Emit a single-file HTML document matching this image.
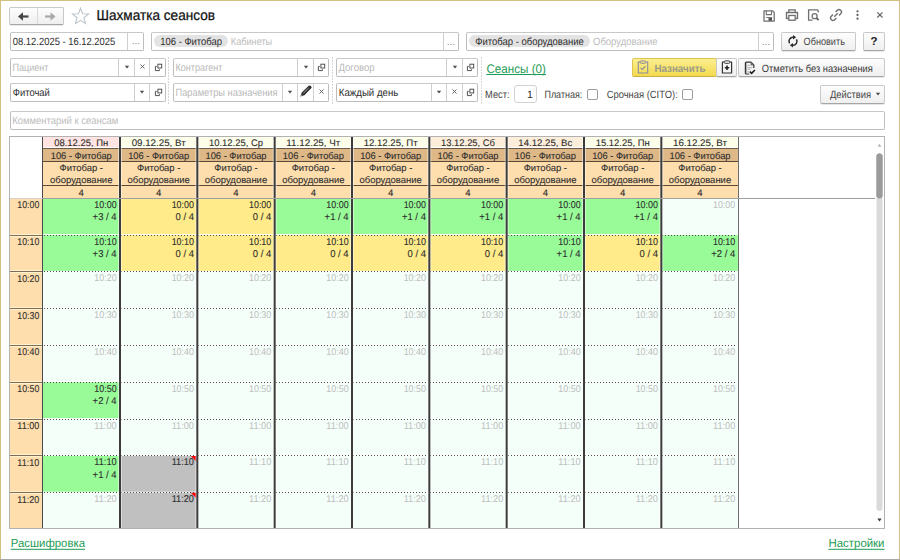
<!DOCTYPE html><html><head><meta charset="utf-8"><style>
*{box-sizing:border-box;margin:0;padding:0}
html,body{width:900px;height:560px;overflow:hidden;background:#fff;font-family:"Liberation Sans", sans-serif;}
.a{position:absolute}
.fld{position:absolute;border:1px solid #bdbdbd;border-top-color:#c8c8c8;border-radius:2px;background:#fff}
.dv{position:absolute;width:1px;background:#cfcfcf}
.btn{position:absolute;border:1px solid #c9c9c9;border-bottom-color:#a6a6a6;border-radius:2px;background:linear-gradient(#fdfdfd,#efefef);box-shadow:0 1px 0 rgba(0,0,0,0.09)}
.tag{position:absolute;height:12px;border-radius:6px;background:#e3e3e3}
.sep{position:absolute;width:1px;background:repeating-linear-gradient(#d6d6d6 0 2px,transparent 2px 3px)}
</style></head><body>
<div class="a" style="left:0;top:0;width:900px;height:1px;background:#d0c182"></div>
<div class="a" style="left:0;top:0;width:1px;height:560px;background:#d0c182"></div>
<div class="a" style="left:899px;top:0;width:1px;height:560px;background:#d0c182"></div>
<div class="a" style="left:0;top:559px;width:900px;height:1px;background:#a9a9a9"></div>
<div class="btn" style="left:9px;top:7px;width:55px;height:18px"></div>
<div class="a" style="left:37px;top:8px;width:1px;height:16px;background:#dadada"></div>
<svg class="a" style="left:17px;top:11px" width="13" height="11" viewBox="0 0 13 11"><path d="M1 5.5 L6 1.2 V9.8 Z" fill="#454545"/><path d="M5 5.5 H11.5" stroke="#454545" stroke-width="2.2"/></svg>
<svg class="a" style="left:44px;top:11px" width="13" height="11" viewBox="0 0 13 11"><path d="M11.5 5.5 L6.5 1.2 V9.8 Z" fill="#a9a9a9"/><path d="M1 5.5 H7.5" stroke="#a9a9a9" stroke-width="2.2"/></svg>
<svg class="a" style="left:71px;top:7px" width="19" height="18" viewBox="0 0 19 18"><path d="M9.5 1.2 L11.6 6.7 L17.6 7 L12.9 10.7 L14.5 16.6 L9.5 13.3 L4.5 16.6 L6.1 10.7 L1.4 7 L7.4 6.7 Z" fill="none" stroke="#bcc4cc" stroke-width="1.1"/></svg>
<svg class="a" style="left:762px;top:9px" width="14" height="14" viewBox="0 0 14 14"><path d="M2 1.8 H10.5 L12.2 3.5 V12.2 H2 Z" fill="none" stroke="#707070" stroke-width="1.3" stroke-linejoin="round"/><path d="M4.3 2 V5.6 H9.5 V2" fill="none" stroke="#707070" stroke-width="1.1"/><rect x="6.5" y="8.8" width="3.5" height="3" fill="#555"/><path d="M4 8.5 H10.2" stroke="#707070" stroke-width="0.9"/></svg>
<svg class="a" style="left:785px;top:8px" width="14" height="14" viewBox="0 0 14 14"><path d="M3.8 4 V1.8 H10.2 V4" fill="none" stroke="#707070" stroke-width="1.3"/><path d="M3.5 10.5 H1.5 V4.5 H12.5 V10.5 H10.5" fill="none" stroke="#707070" stroke-width="1.4" stroke-linejoin="round"/><rect x="3.8" y="7.5" width="6.4" height="4.7" fill="#fff" stroke="#707070" stroke-width="1.3"/></svg>
<svg class="a" style="left:807px;top:8px" width="14" height="14" viewBox="0 0 14 14"><path d="M5.5 12.2 H1.6 V1.8 H10.2 A1 1 0 0 1 11.2 2.8 V4.5" fill="none" stroke="#707070" stroke-width="1.3"/><circle cx="7.6" cy="8.2" r="2.5" fill="none" stroke="#707070" stroke-width="1.3"/><path d="M9.4 10 L11.6 12.2" stroke="#555" stroke-width="1.7"/></svg>
<svg class="a" style="left:829px;top:8px" width="14" height="14" viewBox="0 0 14 14"><path d="M5.2 8.8 L8.8 5.2" stroke="#707070" stroke-width="1.3"/><path d="M6.6 4 L8.3 2.3 A2.3 2.3 0 0 1 11.7 5.7 L10 7.4" fill="none" stroke="#707070" stroke-width="1.4"/><path d="M7.4 10 L5.7 11.7 A2.3 2.3 0 0 1 2.3 8.3 L4 6.6" fill="none" stroke="#707070" stroke-width="1.4"/></svg>
<svg class="a" style="left:855px;top:9px" width="5" height="12" viewBox="0 0 5 12"><circle cx="2.5" cy="2.3" r="1.15" fill="#666"/><circle cx="2.5" cy="6" r="1.15" fill="#666"/><circle cx="2.5" cy="9.7" r="1.15" fill="#666"/></svg>
<svg class="a" style="left:876px;top:11px" width="8" height="8" viewBox="0 0 8 8"><path d="M1.3 1.3 L6.5 6.5 M6.5 1.3 L1.3 6.5" stroke="#666" stroke-width="1.2"/></svg>
<div class="fld" style="left:10px;top:32px;width:134px;height:19px"></div>
<div class="dv" style="left:127px;top:33px;height:17px"></div>
<svg class="a" style="left:131.5px;top:41.7px" width="8" height="3" viewBox="0 0 8 3"><circle cx="1.2" cy="1.5" r="0.6" fill="#777"/><circle cx="4" cy="1.5" r="0.6" fill="#777"/><circle cx="6.8" cy="1.5" r="0.6" fill="#777"/></svg>
<div class="fld" style="left:151px;top:32px;width:308px;height:19px"></div>
<div class="tag" style="left:154px;top:35px;width:74px"></div>
<div class="dv" style="left:443px;top:33px;height:17px"></div><svg class="a" style="left:447px;top:42.5px" width="8" height="3" viewBox="0 0 8 3"><circle cx="1.2" cy="1.5" r="0.6" fill="#777"/><circle cx="4" cy="1.5" r="0.6" fill="#777"/><circle cx="6.8" cy="1.5" r="0.6" fill="#777"/></svg>
<div class="fld" style="left:466px;top:32px;width:308px;height:19px"></div>
<div class="tag" style="left:469px;top:35px;width:121px"></div>
<div class="dv" style="left:758px;top:33px;height:17px"></div><svg class="a" style="left:762px;top:42.5px" width="8" height="3" viewBox="0 0 8 3"><circle cx="1.2" cy="1.5" r="0.6" fill="#777"/><circle cx="4" cy="1.5" r="0.6" fill="#777"/><circle cx="6.8" cy="1.5" r="0.6" fill="#777"/></svg>
<div class="btn" style="left:781px;top:32px;width:75px;height:19px"></div>
<svg class="a" style="left:786.5px;top:35px" width="12" height="13" viewBox="0 0 12 13"><path d="M2.54 8.3 A4 4 0 0 1 6.3 2.3" fill="none" stroke="#2e2e2e" stroke-width="1.6"/><path d="M9.2 2.3 L6 0 V4.6 Z" fill="#2e2e2e"/><path d="M9.46 4.3 A4 4 0 0 1 5.7 10.3" fill="none" stroke="#2e2e2e" stroke-width="1.6"/><path d="M2.8 10.3 L6 8 V12.6 Z" fill="#2e2e2e"/></svg>
<div class="btn" style="left:863px;top:32px;width:22px;height:19px"></div>
<div class="fld" style="left:10px;top:58px;width:156px;height:19px"></div>
<div class="dv" style="left:118px;top:59px;height:17px"></div>
<svg class="a" style="left:123.5px;top:64.7px" width="6" height="4" viewBox="0 0 6 4"><path d="M0.8 0.8 H5.2 L3 3.4 Z" fill="#4a4a4a"/></svg>
<div class="dv" style="left:134px;top:59px;height:17px"></div>
<svg class="a" style="left:138.5px;top:63.2px" width="7" height="7" viewBox="0 0 7 7"><path d="M1.5 1.5 L5.5 5.5 M5.5 1.5 L1.5 5.5" stroke="#555" stroke-width="0.9"/></svg>
<div class="dv" style="left:149px;top:59px;height:17px"></div>
<svg class="a" style="left:153.5px;top:62.7px" width="9" height="9" viewBox="0 0 9 9"><rect x="3.9" y="1.2" width="3.8" height="3.8" fill="none" stroke="#4a4a4a" stroke-width="0.95"/><path d="M2.8 3.4 H1.4 V7.6 H5.4 V6.2" fill="none" stroke="#4a4a4a" stroke-width="0.95"/></svg>
<div class="sep" style="left:168px;top:57px;height:47px"></div>
<div class="fld" style="left:173px;top:58px;width:156px;height:19px"></div>
<div class="dv" style="left:297px;top:59px;height:17px"></div>
<svg class="a" style="left:302.5px;top:64.7px" width="6" height="4" viewBox="0 0 6 4"><path d="M0.8 0.8 H5.2 L3 3.4 Z" fill="#4a4a4a"/></svg>
<div class="dv" style="left:313px;top:59px;height:17px"></div>
<svg class="a" style="left:317.0px;top:62.7px" width="9" height="9" viewBox="0 0 9 9"><rect x="3.9" y="1.2" width="3.8" height="3.8" fill="none" stroke="#4a4a4a" stroke-width="0.95"/><path d="M2.8 3.4 H1.4 V7.6 H5.4 V6.2" fill="none" stroke="#4a4a4a" stroke-width="0.95"/></svg>
<div class="sep" style="left:332px;top:57px;height:47px"></div>
<div class="fld" style="left:336px;top:58px;width:142px;height:19px"></div>
<div class="dv" style="left:446px;top:59px;height:17px"></div>
<svg class="a" style="left:451.5px;top:64.7px" width="6" height="4" viewBox="0 0 6 4"><path d="M0.8 0.8 H5.2 L3 3.4 Z" fill="#4a4a4a"/></svg>
<div class="dv" style="left:462px;top:59px;height:17px"></div>
<svg class="a" style="left:466.0px;top:62.7px" width="9" height="9" viewBox="0 0 9 9"><rect x="3.9" y="1.2" width="3.8" height="3.8" fill="none" stroke="#4a4a4a" stroke-width="0.95"/><path d="M2.8 3.4 H1.4 V7.6 H5.4 V6.2" fill="none" stroke="#4a4a4a" stroke-width="0.95"/></svg>
<div class="sep" style="left:481px;top:57px;height:47px"></div>
<div class="a" style="left:632px;top:58px;width:85px;height:19px;border:1px solid #dcc450;border-bottom-color:#c9b040;border-radius:2px;background:linear-gradient(#fcee90,#f3db4e)"></div>
<svg class="a" style="left:637px;top:60px" width="12" height="14" viewBox="0 0 12 14"><path d="M3 2 H1.3 V13 H10.7 V2 H9" fill="none" stroke="#8b8ca0" stroke-width="1.1" stroke-linejoin="round"/><rect x="3.2" y="0.9" width="5.6" height="2.4" rx="1" fill="#f6e37a" stroke="#8b8ca0" stroke-width="1"/><path d="M3.6 7.8 L5.3 9.5 L8.4 6.2" fill="none" stroke="#8b8ca0" stroke-width="1.1"/></svg>
<div class="btn" style="left:716px;top:58px;width:21px;height:19px"></div>
<svg class="a" style="left:721px;top:60px" width="12" height="14" viewBox="0 0 12 14"><path d="M3 2 H1.4 V13 H10.6 V2 H9" fill="none" stroke="#333" stroke-width="1.2" stroke-linejoin="round"/><rect x="3.2" y="0.9" width="5.6" height="2.4" rx="1" fill="#fff" stroke="#333" stroke-width="1"/><path d="M6 5.6 V10 M3.8 7.8 H8.2" stroke="#222" stroke-width="1.6"/></svg>
<div class="btn" style="left:738px;top:58px;width:147px;height:19px"></div>
<svg class="a" style="left:743.5px;top:60.5px" width="12" height="14" viewBox="0 0 12 14"><path d="M5.2 13 H2.4 A1 1 0 0 1 1.4 12 V2.2 A1 1 0 0 1 2.4 1.2 H7 L9.8 4 V7" fill="none" stroke="#333" stroke-width="1.2" stroke-linejoin="round"/><path d="M2.6 2 V12.4" stroke="#999" stroke-width="0.8"/><path d="M7 1.3 V4 H9.7" fill="#888" stroke="#555" stroke-width="0.8"/><path d="M3.4 4.4 H6.4 M3.4 6.6 H8.4 M3.4 8.2 H6.6 M3.4 10.8 H5.4" stroke="#a0a0a0" stroke-width="0.8"/><path d="M5.9 10.6 L7.6 12.3 L10.9 9" fill="none" stroke="#1e1e1e" stroke-width="1.6"/></svg>
<div class="fld" style="left:10px;top:83px;width:156px;height:19px"></div>
<div class="dv" style="left:134px;top:84px;height:17px"></div>
<svg class="a" style="left:139.0px;top:89.7px" width="6" height="4" viewBox="0 0 6 4"><path d="M0.8 0.8 H5.2 L3 3.4 Z" fill="#4a4a4a"/></svg>
<div class="dv" style="left:149px;top:84px;height:17px"></div>
<svg class="a" style="left:153.5px;top:87.7px" width="9" height="9" viewBox="0 0 9 9"><rect x="3.9" y="1.2" width="3.8" height="3.8" fill="none" stroke="#4a4a4a" stroke-width="0.95"/><path d="M2.8 3.4 H1.4 V7.6 H5.4 V6.2" fill="none" stroke="#4a4a4a" stroke-width="0.95"/></svg>
<div class="fld" style="left:173px;top:83px;width:156px;height:19px"></div>
<div class="dv" style="left:282px;top:84px;height:17px"></div>
<svg class="a" style="left:287.0px;top:89.7px" width="6" height="4" viewBox="0 0 6 4"><path d="M0.8 0.8 H5.2 L3 3.4 Z" fill="#4a4a4a"/></svg>
<div class="dv" style="left:297px;top:84px;height:17px"></div>
<svg class="a" style="left:298.0px;top:84.2px" width="15" height="15" viewBox="0 0 15 15"><path d="M2.4 12.6 L3.8 8.6 L10.4 2.0 L12.9 4.5 L6.4 11.2 Z" fill="#2e2e2e"/><circle cx="11.7" cy="3.3" r="1.75" fill="#2e2e2e"/><path d="M5.4 9.2 L10.6 4.0" stroke="#d8d8d8" stroke-width="0.7"/><path d="M2.4 12.6 L3.2 10.4 L4.6 11.8 Z" fill="#999"/></svg>
<div class="dv" style="left:313px;top:84px;height:17px"></div>
<svg class="a" style="left:317.5px;top:88.2px" width="7" height="7" viewBox="0 0 7 7"><path d="M1.5 1.5 L5.5 5.5 M5.5 1.5 L1.5 5.5" stroke="#555" stroke-width="0.9"/></svg>
<div class="fld" style="left:336px;top:83px;width:142px;height:19px"></div>
<div class="dv" style="left:431px;top:84px;height:17px"></div>
<svg class="a" style="left:436.0px;top:89.7px" width="6" height="4" viewBox="0 0 6 4"><path d="M0.8 0.8 H5.2 L3 3.4 Z" fill="#4a4a4a"/></svg>
<div class="dv" style="left:446px;top:84px;height:17px"></div>
<svg class="a" style="left:451.0px;top:88.2px" width="7" height="7" viewBox="0 0 7 7"><path d="M1.5 1.5 L5.5 5.5 M5.5 1.5 L1.5 5.5" stroke="#555" stroke-width="0.9"/></svg>
<div class="dv" style="left:462px;top:84px;height:17px"></div>
<svg class="a" style="left:466.0px;top:87.7px" width="9" height="9" viewBox="0 0 9 9"><rect x="3.9" y="1.2" width="3.8" height="3.8" fill="none" stroke="#4a4a4a" stroke-width="0.95"/><path d="M2.8 3.4 H1.4 V7.6 H5.4 V6.2" fill="none" stroke="#4a4a4a" stroke-width="0.95"/></svg>
<div class="a" style="left:514px;top:85px;width:23px;height:18px;border:1px solid #d2d2d2;border-radius:3px;background:#fff"></div>
<div class="a" style="left:587px;top:89px;width:11px;height:11px;border:1px solid #9d9d9d;border-radius:2px;background:#fff"></div>
<div class="a" style="left:682px;top:89px;width:11px;height:11px;border:1px solid #9d9d9d;border-radius:2px;background:#fff"></div>
<div class="btn" style="left:820px;top:85px;width:65px;height:19px"></div>
<svg class="a" style="left:875px;top:92px" width="6" height="4" viewBox="0 0 6 4"><path d="M0.8 0.8 H5.2 L3 3.4 Z" fill="#4a4a4a"/></svg>
<div class="fld" style="left:10px;top:111px;width:875px;height:19px"></div>
<svg class="a" style="left:0;top:0" width="900" height="560" viewBox="0 0 900 560"><rect x="9" y="136" width="876" height="393" fill="#fff"/><rect x="43.00" y="137" width="76.25" height="10" fill="#ffe4e1"/><rect x="43.00" y="149" width="76.25" height="12" fill="#deb887"/><rect x="43.00" y="162" width="76.25" height="23" fill="#ffdead"/><rect x="43.00" y="186" width="76.25" height="12" fill="#ffdead"/><rect x="42.25" y="148" width="77.75" height="1" fill="#6b5a48"/><rect x="42.25" y="161" width="77.75" height="1" fill="#5a4a3a"/><rect x="42.25" y="185" width="77.75" height="1" fill="#5a4a3a"/><rect x="120.75" y="137" width="75.83" height="10" fill="#fdfeea"/><rect x="120.75" y="149" width="75.83" height="12" fill="#deb887"/><rect x="120.75" y="162" width="75.83" height="23" fill="#ffdead"/><rect x="120.75" y="186" width="75.83" height="12" fill="#ffdead"/><rect x="120.00" y="148" width="77.33" height="1" fill="#6b5a48"/><rect x="120.00" y="161" width="77.33" height="1" fill="#5a4a3a"/><rect x="120.00" y="185" width="77.33" height="1" fill="#5a4a3a"/><rect x="198.08" y="137" width="75.83" height="10" fill="#fdfeea"/><rect x="198.08" y="149" width="75.83" height="12" fill="#deb887"/><rect x="198.08" y="162" width="75.83" height="23" fill="#ffdead"/><rect x="198.08" y="186" width="75.83" height="12" fill="#ffdead"/><rect x="197.33" y="148" width="77.33" height="1" fill="#6b5a48"/><rect x="197.33" y="161" width="77.33" height="1" fill="#5a4a3a"/><rect x="197.33" y="185" width="77.33" height="1" fill="#5a4a3a"/><rect x="275.42" y="137" width="75.83" height="10" fill="#fdfeea"/><rect x="275.42" y="149" width="75.83" height="12" fill="#deb887"/><rect x="275.42" y="162" width="75.83" height="23" fill="#ffdead"/><rect x="275.42" y="186" width="75.83" height="12" fill="#ffdead"/><rect x="274.67" y="148" width="77.33" height="1" fill="#6b5a48"/><rect x="274.67" y="161" width="77.33" height="1" fill="#5a4a3a"/><rect x="274.67" y="185" width="77.33" height="1" fill="#5a4a3a"/><rect x="352.75" y="137" width="75.83" height="10" fill="#fdfeea"/><rect x="352.75" y="149" width="75.83" height="12" fill="#deb887"/><rect x="352.75" y="162" width="75.83" height="23" fill="#ffdead"/><rect x="352.75" y="186" width="75.83" height="12" fill="#ffdead"/><rect x="352.00" y="148" width="77.33" height="1" fill="#6b5a48"/><rect x="352.00" y="161" width="77.33" height="1" fill="#5a4a3a"/><rect x="352.00" y="185" width="77.33" height="1" fill="#5a4a3a"/><rect x="430.08" y="137" width="75.83" height="10" fill="#fdeedc"/><rect x="430.08" y="149" width="75.83" height="12" fill="#deb887"/><rect x="430.08" y="162" width="75.83" height="23" fill="#ffdead"/><rect x="430.08" y="186" width="75.83" height="12" fill="#ffdead"/><rect x="429.33" y="148" width="77.33" height="1" fill="#6b5a48"/><rect x="429.33" y="161" width="77.33" height="1" fill="#5a4a3a"/><rect x="429.33" y="185" width="77.33" height="1" fill="#5a4a3a"/><rect x="507.41" y="137" width="75.83" height="10" fill="#fdeedc"/><rect x="507.41" y="149" width="75.83" height="12" fill="#deb887"/><rect x="507.41" y="162" width="75.83" height="23" fill="#ffdead"/><rect x="507.41" y="186" width="75.83" height="12" fill="#ffdead"/><rect x="506.66" y="148" width="77.33" height="1" fill="#6b5a48"/><rect x="506.66" y="161" width="77.33" height="1" fill="#5a4a3a"/><rect x="506.66" y="185" width="77.33" height="1" fill="#5a4a3a"/><rect x="584.75" y="137" width="75.83" height="10" fill="#fdfeea"/><rect x="584.75" y="149" width="75.83" height="12" fill="#deb887"/><rect x="584.75" y="162" width="75.83" height="23" fill="#ffdead"/><rect x="584.75" y="186" width="75.83" height="12" fill="#ffdead"/><rect x="584.00" y="148" width="77.33" height="1" fill="#6b5a48"/><rect x="584.00" y="161" width="77.33" height="1" fill="#5a4a3a"/><rect x="584.00" y="185" width="77.33" height="1" fill="#5a4a3a"/><rect x="662.08" y="137" width="75.83" height="10" fill="#fdfeea"/><rect x="662.08" y="149" width="75.83" height="12" fill="#deb887"/><rect x="662.08" y="162" width="75.83" height="23" fill="#ffdead"/><rect x="662.08" y="186" width="75.83" height="12" fill="#ffdead"/><rect x="661.33" y="148" width="77.33" height="1" fill="#6b5a48"/><rect x="661.33" y="161" width="77.33" height="1" fill="#5a4a3a"/><rect x="661.33" y="185" width="77.33" height="1" fill="#5a4a3a"/><rect x="10" y="199" width="32" height="329" fill="#ffdead"/><rect x="10" y="234" width="32" height="3" fill="#fff2cc"/><rect x="10" y="235" width="32" height="1" fill="#806c56"/><rect x="10" y="270" width="32" height="3" fill="#fff2cc"/><rect x="10" y="271" width="32" height="1" fill="#806c56"/><rect x="10" y="307" width="32" height="3" fill="#fff2cc"/><rect x="10" y="308" width="32" height="1" fill="#806c56"/><rect x="10" y="344" width="32" height="3" fill="#fff2cc"/><rect x="10" y="345" width="32" height="1" fill="#806c56"/><rect x="10" y="381" width="32" height="3" fill="#fff2cc"/><rect x="10" y="382" width="32" height="1" fill="#806c56"/><rect x="10" y="418" width="32" height="3" fill="#fff2cc"/><rect x="10" y="419" width="32" height="1" fill="#806c56"/><rect x="10" y="454" width="32" height="3" fill="#fff2cc"/><rect x="10" y="455" width="32" height="1" fill="#806c56"/><rect x="10" y="491" width="32" height="3" fill="#fff2cc"/><rect x="10" y="492" width="32" height="1" fill="#806c56"/><rect x="43.00" y="198.30" width="76.25" height="35.80" fill="#98fb98"/><rect x="120.75" y="198.30" width="75.83" height="35.80" fill="#ffeb8a"/><rect x="198.08" y="198.30" width="75.83" height="35.80" fill="#ffeb8a"/><rect x="275.42" y="198.30" width="75.83" height="35.80" fill="#98fb98"/><rect x="352.75" y="198.30" width="75.83" height="35.80" fill="#98fb98"/><rect x="430.08" y="198.30" width="75.83" height="35.80" fill="#98fb98"/><rect x="507.41" y="198.30" width="75.83" height="35.80" fill="#98fb98"/><rect x="584.75" y="198.30" width="75.83" height="35.80" fill="#98fb98"/><rect x="662.08" y="198.30" width="75.83" height="35.80" fill="#f5fffa"/><rect x="43.00" y="235.10" width="76.25" height="35.80" fill="#98fb98"/><rect x="120.75" y="235.10" width="75.83" height="35.80" fill="#ffeb8a"/><rect x="198.08" y="235.10" width="75.83" height="35.80" fill="#ffeb8a"/><rect x="275.42" y="235.10" width="75.83" height="35.80" fill="#ffeb8a"/><rect x="352.75" y="235.10" width="75.83" height="35.80" fill="#ffeb8a"/><rect x="430.08" y="235.10" width="75.83" height="35.80" fill="#ffeb8a"/><rect x="507.41" y="235.10" width="75.83" height="35.80" fill="#98fb98"/><rect x="584.75" y="235.10" width="75.83" height="35.80" fill="#ffeb8a"/><rect x="662.08" y="235.10" width="75.83" height="35.80" fill="#98fb98"/><rect x="43.00" y="271.90" width="76.25" height="35.80" fill="#f5fffa"/><rect x="120.75" y="271.90" width="75.83" height="35.80" fill="#f5fffa"/><rect x="198.08" y="271.90" width="75.83" height="35.80" fill="#f5fffa"/><rect x="275.42" y="271.90" width="75.83" height="35.80" fill="#f5fffa"/><rect x="352.75" y="271.90" width="75.83" height="35.80" fill="#f5fffa"/><rect x="430.08" y="271.90" width="75.83" height="35.80" fill="#f5fffa"/><rect x="507.41" y="271.90" width="75.83" height="35.80" fill="#f5fffa"/><rect x="584.75" y="271.90" width="75.83" height="35.80" fill="#f5fffa"/><rect x="662.08" y="271.90" width="75.83" height="35.80" fill="#f5fffa"/><rect x="43.00" y="308.70" width="76.25" height="35.80" fill="#f5fffa"/><rect x="120.75" y="308.70" width="75.83" height="35.80" fill="#f5fffa"/><rect x="198.08" y="308.70" width="75.83" height="35.80" fill="#f5fffa"/><rect x="275.42" y="308.70" width="75.83" height="35.80" fill="#f5fffa"/><rect x="352.75" y="308.70" width="75.83" height="35.80" fill="#f5fffa"/><rect x="430.08" y="308.70" width="75.83" height="35.80" fill="#f5fffa"/><rect x="507.41" y="308.70" width="75.83" height="35.80" fill="#f5fffa"/><rect x="584.75" y="308.70" width="75.83" height="35.80" fill="#f5fffa"/><rect x="662.08" y="308.70" width="75.83" height="35.80" fill="#f5fffa"/><rect x="43.00" y="345.50" width="76.25" height="35.80" fill="#f5fffa"/><rect x="120.75" y="345.50" width="75.83" height="35.80" fill="#f5fffa"/><rect x="198.08" y="345.50" width="75.83" height="35.80" fill="#f5fffa"/><rect x="275.42" y="345.50" width="75.83" height="35.80" fill="#f5fffa"/><rect x="352.75" y="345.50" width="75.83" height="35.80" fill="#f5fffa"/><rect x="430.08" y="345.50" width="75.83" height="35.80" fill="#f5fffa"/><rect x="507.41" y="345.50" width="75.83" height="35.80" fill="#f5fffa"/><rect x="584.75" y="345.50" width="75.83" height="35.80" fill="#f5fffa"/><rect x="662.08" y="345.50" width="75.83" height="35.80" fill="#f5fffa"/><rect x="43.00" y="382.30" width="76.25" height="35.80" fill="#98fb98"/><rect x="120.75" y="382.30" width="75.83" height="35.80" fill="#f5fffa"/><rect x="198.08" y="382.30" width="75.83" height="35.80" fill="#f5fffa"/><rect x="275.42" y="382.30" width="75.83" height="35.80" fill="#f5fffa"/><rect x="352.75" y="382.30" width="75.83" height="35.80" fill="#f5fffa"/><rect x="430.08" y="382.30" width="75.83" height="35.80" fill="#f5fffa"/><rect x="507.41" y="382.30" width="75.83" height="35.80" fill="#f5fffa"/><rect x="584.75" y="382.30" width="75.83" height="35.80" fill="#f5fffa"/><rect x="662.08" y="382.30" width="75.83" height="35.80" fill="#f5fffa"/><rect x="43.00" y="419.10" width="76.25" height="35.80" fill="#f5fffa"/><rect x="120.75" y="419.10" width="75.83" height="35.80" fill="#f5fffa"/><rect x="198.08" y="419.10" width="75.83" height="35.80" fill="#f5fffa"/><rect x="275.42" y="419.10" width="75.83" height="35.80" fill="#f5fffa"/><rect x="352.75" y="419.10" width="75.83" height="35.80" fill="#f5fffa"/><rect x="430.08" y="419.10" width="75.83" height="35.80" fill="#f5fffa"/><rect x="507.41" y="419.10" width="75.83" height="35.80" fill="#f5fffa"/><rect x="584.75" y="419.10" width="75.83" height="35.80" fill="#f5fffa"/><rect x="662.08" y="419.10" width="75.83" height="35.80" fill="#f5fffa"/><rect x="43.00" y="455.90" width="76.25" height="35.80" fill="#98fb98"/><rect x="120.75" y="455.90" width="75.83" height="35.80" fill="#c0c0c0"/><path d="M190.83 455.90 H196.33 V461.40 Z" fill="#f00"/><rect x="198.08" y="455.90" width="75.83" height="35.80" fill="#f5fffa"/><rect x="275.42" y="455.90" width="75.83" height="35.80" fill="#f5fffa"/><rect x="352.75" y="455.90" width="75.83" height="35.80" fill="#f5fffa"/><rect x="430.08" y="455.90" width="75.83" height="35.80" fill="#f5fffa"/><rect x="507.41" y="455.90" width="75.83" height="35.80" fill="#f5fffa"/><rect x="584.75" y="455.90" width="75.83" height="35.80" fill="#f5fffa"/><rect x="662.08" y="455.90" width="75.83" height="35.80" fill="#f5fffa"/><rect x="43.00" y="492.70" width="76.25" height="35.80" fill="#f5fffa"/><rect x="120.75" y="492.70" width="75.83" height="35.80" fill="#c0c0c0"/><path d="M190.83 492.70 H196.33 V498.20 Z" fill="#f00"/><rect x="198.08" y="492.70" width="75.83" height="35.80" fill="#f5fffa"/><rect x="275.42" y="492.70" width="75.83" height="35.80" fill="#f5fffa"/><rect x="352.75" y="492.70" width="75.83" height="35.80" fill="#f5fffa"/><rect x="430.08" y="492.70" width="75.83" height="35.80" fill="#f5fffa"/><rect x="507.41" y="492.70" width="75.83" height="35.80" fill="#f5fffa"/><rect x="584.75" y="492.70" width="75.83" height="35.80" fill="#f5fffa"/><rect x="662.08" y="492.70" width="75.83" height="35.80" fill="#f5fffa"/><path d="M44 235h1v1h-1zM47 235h1v1h-1zM50 235h1v1h-1zM53 235h1v1h-1zM56 235h1v1h-1zM59 235h1v1h-1zM62 235h1v1h-1zM65 235h1v1h-1zM68 235h1v1h-1zM71 235h1v1h-1zM74 235h1v1h-1zM77 235h1v1h-1zM80 235h1v1h-1zM83 235h1v1h-1zM86 235h1v1h-1zM89 235h1v1h-1zM92 235h1v1h-1zM95 235h1v1h-1zM98 235h1v1h-1zM101 235h1v1h-1zM104 235h1v1h-1zM107 235h1v1h-1zM110 235h1v1h-1zM113 235h1v1h-1zM116 235h1v1h-1zM121 235h1v1h-1zM124 235h1v1h-1zM127 235h1v1h-1zM130 235h1v1h-1zM133 235h1v1h-1zM136 235h1v1h-1zM139 235h1v1h-1zM142 235h1v1h-1zM145 235h1v1h-1zM148 235h1v1h-1zM151 235h1v1h-1zM154 235h1v1h-1zM157 235h1v1h-1zM160 235h1v1h-1zM163 235h1v1h-1zM166 235h1v1h-1zM169 235h1v1h-1zM172 235h1v1h-1zM175 235h1v1h-1zM178 235h1v1h-1zM181 235h1v1h-1zM184 235h1v1h-1zM187 235h1v1h-1zM190 235h1v1h-1zM193 235h1v1h-1zM198 235h1v1h-1zM201 235h1v1h-1zM204 235h1v1h-1zM207 235h1v1h-1zM210 235h1v1h-1zM213 235h1v1h-1zM216 235h1v1h-1zM219 235h1v1h-1zM222 235h1v1h-1zM225 235h1v1h-1zM228 235h1v1h-1zM231 235h1v1h-1zM234 235h1v1h-1zM237 235h1v1h-1zM240 235h1v1h-1zM243 235h1v1h-1zM246 235h1v1h-1zM249 235h1v1h-1zM252 235h1v1h-1zM255 235h1v1h-1zM258 235h1v1h-1zM261 235h1v1h-1zM264 235h1v1h-1zM267 235h1v1h-1zM270 235h1v1h-1zM276 235h1v1h-1zM279 235h1v1h-1zM282 235h1v1h-1zM285 235h1v1h-1zM288 235h1v1h-1zM291 235h1v1h-1zM294 235h1v1h-1zM297 235h1v1h-1zM300 235h1v1h-1zM303 235h1v1h-1zM306 235h1v1h-1zM309 235h1v1h-1zM312 235h1v1h-1zM315 235h1v1h-1zM318 235h1v1h-1zM321 235h1v1h-1zM324 235h1v1h-1zM327 235h1v1h-1zM330 235h1v1h-1zM333 235h1v1h-1zM336 235h1v1h-1zM339 235h1v1h-1zM342 235h1v1h-1zM345 235h1v1h-1zM348 235h1v1h-1zM353 235h1v1h-1zM356 235h1v1h-1zM359 235h1v1h-1zM362 235h1v1h-1zM365 235h1v1h-1zM368 235h1v1h-1zM371 235h1v1h-1zM374 235h1v1h-1zM377 235h1v1h-1zM380 235h1v1h-1zM383 235h1v1h-1zM386 235h1v1h-1zM389 235h1v1h-1zM392 235h1v1h-1zM395 235h1v1h-1zM398 235h1v1h-1zM401 235h1v1h-1zM404 235h1v1h-1zM407 235h1v1h-1zM410 235h1v1h-1zM413 235h1v1h-1zM416 235h1v1h-1zM419 235h1v1h-1zM422 235h1v1h-1zM425 235h1v1h-1zM430 235h1v1h-1zM433 235h1v1h-1zM436 235h1v1h-1zM439 235h1v1h-1zM442 235h1v1h-1zM445 235h1v1h-1zM448 235h1v1h-1zM451 235h1v1h-1zM454 235h1v1h-1zM457 235h1v1h-1zM460 235h1v1h-1zM463 235h1v1h-1zM466 235h1v1h-1zM469 235h1v1h-1zM472 235h1v1h-1zM475 235h1v1h-1zM478 235h1v1h-1zM481 235h1v1h-1zM484 235h1v1h-1zM487 235h1v1h-1zM490 235h1v1h-1zM493 235h1v1h-1zM496 235h1v1h-1zM499 235h1v1h-1zM502 235h1v1h-1zM508 235h1v1h-1zM511 235h1v1h-1zM514 235h1v1h-1zM517 235h1v1h-1zM520 235h1v1h-1zM523 235h1v1h-1zM526 235h1v1h-1zM529 235h1v1h-1zM532 235h1v1h-1zM535 235h1v1h-1zM538 235h1v1h-1zM541 235h1v1h-1zM544 235h1v1h-1zM547 235h1v1h-1zM550 235h1v1h-1zM553 235h1v1h-1zM556 235h1v1h-1zM559 235h1v1h-1zM562 235h1v1h-1zM565 235h1v1h-1zM568 235h1v1h-1zM571 235h1v1h-1zM574 235h1v1h-1zM577 235h1v1h-1zM580 235h1v1h-1zM585 235h1v1h-1zM588 235h1v1h-1zM591 235h1v1h-1zM594 235h1v1h-1zM597 235h1v1h-1zM600 235h1v1h-1zM603 235h1v1h-1zM606 235h1v1h-1zM609 235h1v1h-1zM612 235h1v1h-1zM615 235h1v1h-1zM618 235h1v1h-1zM621 235h1v1h-1zM624 235h1v1h-1zM627 235h1v1h-1zM630 235h1v1h-1zM633 235h1v1h-1zM636 235h1v1h-1zM639 235h1v1h-1zM642 235h1v1h-1zM645 235h1v1h-1zM648 235h1v1h-1zM651 235h1v1h-1zM654 235h1v1h-1zM657 235h1v1h-1zM662 235h1v1h-1zM665 235h1v1h-1zM668 235h1v1h-1zM671 235h1v1h-1zM674 235h1v1h-1zM677 235h1v1h-1zM680 235h1v1h-1zM683 235h1v1h-1zM686 235h1v1h-1zM689 235h1v1h-1zM692 235h1v1h-1zM695 235h1v1h-1zM698 235h1v1h-1zM701 235h1v1h-1zM704 235h1v1h-1zM707 235h1v1h-1zM710 235h1v1h-1zM713 235h1v1h-1zM716 235h1v1h-1zM719 235h1v1h-1zM722 235h1v1h-1zM725 235h1v1h-1zM728 235h1v1h-1zM731 235h1v1h-1zM734 235h1v1h-1zM44 271h1v1h-1zM47 271h1v1h-1zM50 271h1v1h-1zM53 271h1v1h-1zM56 271h1v1h-1zM59 271h1v1h-1zM62 271h1v1h-1zM65 271h1v1h-1zM68 271h1v1h-1zM71 271h1v1h-1zM74 271h1v1h-1zM77 271h1v1h-1zM80 271h1v1h-1zM83 271h1v1h-1zM86 271h1v1h-1zM89 271h1v1h-1zM92 271h1v1h-1zM95 271h1v1h-1zM98 271h1v1h-1zM101 271h1v1h-1zM104 271h1v1h-1zM107 271h1v1h-1zM110 271h1v1h-1zM113 271h1v1h-1zM116 271h1v1h-1zM121 271h1v1h-1zM124 271h1v1h-1zM127 271h1v1h-1zM130 271h1v1h-1zM133 271h1v1h-1zM136 271h1v1h-1zM139 271h1v1h-1zM142 271h1v1h-1zM145 271h1v1h-1zM148 271h1v1h-1zM151 271h1v1h-1zM154 271h1v1h-1zM157 271h1v1h-1zM160 271h1v1h-1zM163 271h1v1h-1zM166 271h1v1h-1zM169 271h1v1h-1zM172 271h1v1h-1zM175 271h1v1h-1zM178 271h1v1h-1zM181 271h1v1h-1zM184 271h1v1h-1zM187 271h1v1h-1zM190 271h1v1h-1zM193 271h1v1h-1zM198 271h1v1h-1zM201 271h1v1h-1zM204 271h1v1h-1zM207 271h1v1h-1zM210 271h1v1h-1zM213 271h1v1h-1zM216 271h1v1h-1zM219 271h1v1h-1zM222 271h1v1h-1zM225 271h1v1h-1zM228 271h1v1h-1zM231 271h1v1h-1zM234 271h1v1h-1zM237 271h1v1h-1zM240 271h1v1h-1zM243 271h1v1h-1zM246 271h1v1h-1zM249 271h1v1h-1zM252 271h1v1h-1zM255 271h1v1h-1zM258 271h1v1h-1zM261 271h1v1h-1zM264 271h1v1h-1zM267 271h1v1h-1zM270 271h1v1h-1zM276 271h1v1h-1zM279 271h1v1h-1zM282 271h1v1h-1zM285 271h1v1h-1zM288 271h1v1h-1zM291 271h1v1h-1zM294 271h1v1h-1zM297 271h1v1h-1zM300 271h1v1h-1zM303 271h1v1h-1zM306 271h1v1h-1zM309 271h1v1h-1zM312 271h1v1h-1zM315 271h1v1h-1zM318 271h1v1h-1zM321 271h1v1h-1zM324 271h1v1h-1zM327 271h1v1h-1zM330 271h1v1h-1zM333 271h1v1h-1zM336 271h1v1h-1zM339 271h1v1h-1zM342 271h1v1h-1zM345 271h1v1h-1zM348 271h1v1h-1zM353 271h1v1h-1zM356 271h1v1h-1zM359 271h1v1h-1zM362 271h1v1h-1zM365 271h1v1h-1zM368 271h1v1h-1zM371 271h1v1h-1zM374 271h1v1h-1zM377 271h1v1h-1zM380 271h1v1h-1zM383 271h1v1h-1zM386 271h1v1h-1zM389 271h1v1h-1zM392 271h1v1h-1zM395 271h1v1h-1zM398 271h1v1h-1zM401 271h1v1h-1zM404 271h1v1h-1zM407 271h1v1h-1zM410 271h1v1h-1zM413 271h1v1h-1zM416 271h1v1h-1zM419 271h1v1h-1zM422 271h1v1h-1zM425 271h1v1h-1zM430 271h1v1h-1zM433 271h1v1h-1zM436 271h1v1h-1zM439 271h1v1h-1zM442 271h1v1h-1zM445 271h1v1h-1zM448 271h1v1h-1zM451 271h1v1h-1zM454 271h1v1h-1zM457 271h1v1h-1zM460 271h1v1h-1zM463 271h1v1h-1zM466 271h1v1h-1zM469 271h1v1h-1zM472 271h1v1h-1zM475 271h1v1h-1zM478 271h1v1h-1zM481 271h1v1h-1zM484 271h1v1h-1zM487 271h1v1h-1zM490 271h1v1h-1zM493 271h1v1h-1zM496 271h1v1h-1zM499 271h1v1h-1zM502 271h1v1h-1zM508 271h1v1h-1zM511 271h1v1h-1zM514 271h1v1h-1zM517 271h1v1h-1zM520 271h1v1h-1zM523 271h1v1h-1zM526 271h1v1h-1zM529 271h1v1h-1zM532 271h1v1h-1zM535 271h1v1h-1zM538 271h1v1h-1zM541 271h1v1h-1zM544 271h1v1h-1zM547 271h1v1h-1zM550 271h1v1h-1zM553 271h1v1h-1zM556 271h1v1h-1zM559 271h1v1h-1zM562 271h1v1h-1zM565 271h1v1h-1zM568 271h1v1h-1zM571 271h1v1h-1zM574 271h1v1h-1zM577 271h1v1h-1zM580 271h1v1h-1zM585 271h1v1h-1zM588 271h1v1h-1zM591 271h1v1h-1zM594 271h1v1h-1zM597 271h1v1h-1zM600 271h1v1h-1zM603 271h1v1h-1zM606 271h1v1h-1zM609 271h1v1h-1zM612 271h1v1h-1zM615 271h1v1h-1zM618 271h1v1h-1zM621 271h1v1h-1zM624 271h1v1h-1zM627 271h1v1h-1zM630 271h1v1h-1zM633 271h1v1h-1zM636 271h1v1h-1zM639 271h1v1h-1zM642 271h1v1h-1zM645 271h1v1h-1zM648 271h1v1h-1zM651 271h1v1h-1zM654 271h1v1h-1zM657 271h1v1h-1zM662 271h1v1h-1zM665 271h1v1h-1zM668 271h1v1h-1zM671 271h1v1h-1zM674 271h1v1h-1zM677 271h1v1h-1zM680 271h1v1h-1zM683 271h1v1h-1zM686 271h1v1h-1zM689 271h1v1h-1zM692 271h1v1h-1zM695 271h1v1h-1zM698 271h1v1h-1zM701 271h1v1h-1zM704 271h1v1h-1zM707 271h1v1h-1zM710 271h1v1h-1zM713 271h1v1h-1zM716 271h1v1h-1zM719 271h1v1h-1zM722 271h1v1h-1zM725 271h1v1h-1zM728 271h1v1h-1zM731 271h1v1h-1zM734 271h1v1h-1zM44 308h1v1h-1zM47 308h1v1h-1zM50 308h1v1h-1zM53 308h1v1h-1zM56 308h1v1h-1zM59 308h1v1h-1zM62 308h1v1h-1zM65 308h1v1h-1zM68 308h1v1h-1zM71 308h1v1h-1zM74 308h1v1h-1zM77 308h1v1h-1zM80 308h1v1h-1zM83 308h1v1h-1zM86 308h1v1h-1zM89 308h1v1h-1zM92 308h1v1h-1zM95 308h1v1h-1zM98 308h1v1h-1zM101 308h1v1h-1zM104 308h1v1h-1zM107 308h1v1h-1zM110 308h1v1h-1zM113 308h1v1h-1zM116 308h1v1h-1zM121 308h1v1h-1zM124 308h1v1h-1zM127 308h1v1h-1zM130 308h1v1h-1zM133 308h1v1h-1zM136 308h1v1h-1zM139 308h1v1h-1zM142 308h1v1h-1zM145 308h1v1h-1zM148 308h1v1h-1zM151 308h1v1h-1zM154 308h1v1h-1zM157 308h1v1h-1zM160 308h1v1h-1zM163 308h1v1h-1zM166 308h1v1h-1zM169 308h1v1h-1zM172 308h1v1h-1zM175 308h1v1h-1zM178 308h1v1h-1zM181 308h1v1h-1zM184 308h1v1h-1zM187 308h1v1h-1zM190 308h1v1h-1zM193 308h1v1h-1zM198 308h1v1h-1zM201 308h1v1h-1zM204 308h1v1h-1zM207 308h1v1h-1zM210 308h1v1h-1zM213 308h1v1h-1zM216 308h1v1h-1zM219 308h1v1h-1zM222 308h1v1h-1zM225 308h1v1h-1zM228 308h1v1h-1zM231 308h1v1h-1zM234 308h1v1h-1zM237 308h1v1h-1zM240 308h1v1h-1zM243 308h1v1h-1zM246 308h1v1h-1zM249 308h1v1h-1zM252 308h1v1h-1zM255 308h1v1h-1zM258 308h1v1h-1zM261 308h1v1h-1zM264 308h1v1h-1zM267 308h1v1h-1zM270 308h1v1h-1zM276 308h1v1h-1zM279 308h1v1h-1zM282 308h1v1h-1zM285 308h1v1h-1zM288 308h1v1h-1zM291 308h1v1h-1zM294 308h1v1h-1zM297 308h1v1h-1zM300 308h1v1h-1zM303 308h1v1h-1zM306 308h1v1h-1zM309 308h1v1h-1zM312 308h1v1h-1zM315 308h1v1h-1zM318 308h1v1h-1zM321 308h1v1h-1zM324 308h1v1h-1zM327 308h1v1h-1zM330 308h1v1h-1zM333 308h1v1h-1zM336 308h1v1h-1zM339 308h1v1h-1zM342 308h1v1h-1zM345 308h1v1h-1zM348 308h1v1h-1zM353 308h1v1h-1zM356 308h1v1h-1zM359 308h1v1h-1zM362 308h1v1h-1zM365 308h1v1h-1zM368 308h1v1h-1zM371 308h1v1h-1zM374 308h1v1h-1zM377 308h1v1h-1zM380 308h1v1h-1zM383 308h1v1h-1zM386 308h1v1h-1zM389 308h1v1h-1zM392 308h1v1h-1zM395 308h1v1h-1zM398 308h1v1h-1zM401 308h1v1h-1zM404 308h1v1h-1zM407 308h1v1h-1zM410 308h1v1h-1zM413 308h1v1h-1zM416 308h1v1h-1zM419 308h1v1h-1zM422 308h1v1h-1zM425 308h1v1h-1zM430 308h1v1h-1zM433 308h1v1h-1zM436 308h1v1h-1zM439 308h1v1h-1zM442 308h1v1h-1zM445 308h1v1h-1zM448 308h1v1h-1zM451 308h1v1h-1zM454 308h1v1h-1zM457 308h1v1h-1zM460 308h1v1h-1zM463 308h1v1h-1zM466 308h1v1h-1zM469 308h1v1h-1zM472 308h1v1h-1zM475 308h1v1h-1zM478 308h1v1h-1zM481 308h1v1h-1zM484 308h1v1h-1zM487 308h1v1h-1zM490 308h1v1h-1zM493 308h1v1h-1zM496 308h1v1h-1zM499 308h1v1h-1zM502 308h1v1h-1zM508 308h1v1h-1zM511 308h1v1h-1zM514 308h1v1h-1zM517 308h1v1h-1zM520 308h1v1h-1zM523 308h1v1h-1zM526 308h1v1h-1zM529 308h1v1h-1zM532 308h1v1h-1zM535 308h1v1h-1zM538 308h1v1h-1zM541 308h1v1h-1zM544 308h1v1h-1zM547 308h1v1h-1zM550 308h1v1h-1zM553 308h1v1h-1zM556 308h1v1h-1zM559 308h1v1h-1zM562 308h1v1h-1zM565 308h1v1h-1zM568 308h1v1h-1zM571 308h1v1h-1zM574 308h1v1h-1zM577 308h1v1h-1zM580 308h1v1h-1zM585 308h1v1h-1zM588 308h1v1h-1zM591 308h1v1h-1zM594 308h1v1h-1zM597 308h1v1h-1zM600 308h1v1h-1zM603 308h1v1h-1zM606 308h1v1h-1zM609 308h1v1h-1zM612 308h1v1h-1zM615 308h1v1h-1zM618 308h1v1h-1zM621 308h1v1h-1zM624 308h1v1h-1zM627 308h1v1h-1zM630 308h1v1h-1zM633 308h1v1h-1zM636 308h1v1h-1zM639 308h1v1h-1zM642 308h1v1h-1zM645 308h1v1h-1zM648 308h1v1h-1zM651 308h1v1h-1zM654 308h1v1h-1zM657 308h1v1h-1zM662 308h1v1h-1zM665 308h1v1h-1zM668 308h1v1h-1zM671 308h1v1h-1zM674 308h1v1h-1zM677 308h1v1h-1zM680 308h1v1h-1zM683 308h1v1h-1zM686 308h1v1h-1zM689 308h1v1h-1zM692 308h1v1h-1zM695 308h1v1h-1zM698 308h1v1h-1zM701 308h1v1h-1zM704 308h1v1h-1zM707 308h1v1h-1zM710 308h1v1h-1zM713 308h1v1h-1zM716 308h1v1h-1zM719 308h1v1h-1zM722 308h1v1h-1zM725 308h1v1h-1zM728 308h1v1h-1zM731 308h1v1h-1zM734 308h1v1h-1zM44 345h1v1h-1zM47 345h1v1h-1zM50 345h1v1h-1zM53 345h1v1h-1zM56 345h1v1h-1zM59 345h1v1h-1zM62 345h1v1h-1zM65 345h1v1h-1zM68 345h1v1h-1zM71 345h1v1h-1zM74 345h1v1h-1zM77 345h1v1h-1zM80 345h1v1h-1zM83 345h1v1h-1zM86 345h1v1h-1zM89 345h1v1h-1zM92 345h1v1h-1zM95 345h1v1h-1zM98 345h1v1h-1zM101 345h1v1h-1zM104 345h1v1h-1zM107 345h1v1h-1zM110 345h1v1h-1zM113 345h1v1h-1zM116 345h1v1h-1zM121 345h1v1h-1zM124 345h1v1h-1zM127 345h1v1h-1zM130 345h1v1h-1zM133 345h1v1h-1zM136 345h1v1h-1zM139 345h1v1h-1zM142 345h1v1h-1zM145 345h1v1h-1zM148 345h1v1h-1zM151 345h1v1h-1zM154 345h1v1h-1zM157 345h1v1h-1zM160 345h1v1h-1zM163 345h1v1h-1zM166 345h1v1h-1zM169 345h1v1h-1zM172 345h1v1h-1zM175 345h1v1h-1zM178 345h1v1h-1zM181 345h1v1h-1zM184 345h1v1h-1zM187 345h1v1h-1zM190 345h1v1h-1zM193 345h1v1h-1zM198 345h1v1h-1zM201 345h1v1h-1zM204 345h1v1h-1zM207 345h1v1h-1zM210 345h1v1h-1zM213 345h1v1h-1zM216 345h1v1h-1zM219 345h1v1h-1zM222 345h1v1h-1zM225 345h1v1h-1zM228 345h1v1h-1zM231 345h1v1h-1zM234 345h1v1h-1zM237 345h1v1h-1zM240 345h1v1h-1zM243 345h1v1h-1zM246 345h1v1h-1zM249 345h1v1h-1zM252 345h1v1h-1zM255 345h1v1h-1zM258 345h1v1h-1zM261 345h1v1h-1zM264 345h1v1h-1zM267 345h1v1h-1zM270 345h1v1h-1zM276 345h1v1h-1zM279 345h1v1h-1zM282 345h1v1h-1zM285 345h1v1h-1zM288 345h1v1h-1zM291 345h1v1h-1zM294 345h1v1h-1zM297 345h1v1h-1zM300 345h1v1h-1zM303 345h1v1h-1zM306 345h1v1h-1zM309 345h1v1h-1zM312 345h1v1h-1zM315 345h1v1h-1zM318 345h1v1h-1zM321 345h1v1h-1zM324 345h1v1h-1zM327 345h1v1h-1zM330 345h1v1h-1zM333 345h1v1h-1zM336 345h1v1h-1zM339 345h1v1h-1zM342 345h1v1h-1zM345 345h1v1h-1zM348 345h1v1h-1zM353 345h1v1h-1zM356 345h1v1h-1zM359 345h1v1h-1zM362 345h1v1h-1zM365 345h1v1h-1zM368 345h1v1h-1zM371 345h1v1h-1zM374 345h1v1h-1zM377 345h1v1h-1zM380 345h1v1h-1zM383 345h1v1h-1zM386 345h1v1h-1zM389 345h1v1h-1zM392 345h1v1h-1zM395 345h1v1h-1zM398 345h1v1h-1zM401 345h1v1h-1zM404 345h1v1h-1zM407 345h1v1h-1zM410 345h1v1h-1zM413 345h1v1h-1zM416 345h1v1h-1zM419 345h1v1h-1zM422 345h1v1h-1zM425 345h1v1h-1zM430 345h1v1h-1zM433 345h1v1h-1zM436 345h1v1h-1zM439 345h1v1h-1zM442 345h1v1h-1zM445 345h1v1h-1zM448 345h1v1h-1zM451 345h1v1h-1zM454 345h1v1h-1zM457 345h1v1h-1zM460 345h1v1h-1zM463 345h1v1h-1zM466 345h1v1h-1zM469 345h1v1h-1zM472 345h1v1h-1zM475 345h1v1h-1zM478 345h1v1h-1zM481 345h1v1h-1zM484 345h1v1h-1zM487 345h1v1h-1zM490 345h1v1h-1zM493 345h1v1h-1zM496 345h1v1h-1zM499 345h1v1h-1zM502 345h1v1h-1zM508 345h1v1h-1zM511 345h1v1h-1zM514 345h1v1h-1zM517 345h1v1h-1zM520 345h1v1h-1zM523 345h1v1h-1zM526 345h1v1h-1zM529 345h1v1h-1zM532 345h1v1h-1zM535 345h1v1h-1zM538 345h1v1h-1zM541 345h1v1h-1zM544 345h1v1h-1zM547 345h1v1h-1zM550 345h1v1h-1zM553 345h1v1h-1zM556 345h1v1h-1zM559 345h1v1h-1zM562 345h1v1h-1zM565 345h1v1h-1zM568 345h1v1h-1zM571 345h1v1h-1zM574 345h1v1h-1zM577 345h1v1h-1zM580 345h1v1h-1zM585 345h1v1h-1zM588 345h1v1h-1zM591 345h1v1h-1zM594 345h1v1h-1zM597 345h1v1h-1zM600 345h1v1h-1zM603 345h1v1h-1zM606 345h1v1h-1zM609 345h1v1h-1zM612 345h1v1h-1zM615 345h1v1h-1zM618 345h1v1h-1zM621 345h1v1h-1zM624 345h1v1h-1zM627 345h1v1h-1zM630 345h1v1h-1zM633 345h1v1h-1zM636 345h1v1h-1zM639 345h1v1h-1zM642 345h1v1h-1zM645 345h1v1h-1zM648 345h1v1h-1zM651 345h1v1h-1zM654 345h1v1h-1zM657 345h1v1h-1zM662 345h1v1h-1zM665 345h1v1h-1zM668 345h1v1h-1zM671 345h1v1h-1zM674 345h1v1h-1zM677 345h1v1h-1zM680 345h1v1h-1zM683 345h1v1h-1zM686 345h1v1h-1zM689 345h1v1h-1zM692 345h1v1h-1zM695 345h1v1h-1zM698 345h1v1h-1zM701 345h1v1h-1zM704 345h1v1h-1zM707 345h1v1h-1zM710 345h1v1h-1zM713 345h1v1h-1zM716 345h1v1h-1zM719 345h1v1h-1zM722 345h1v1h-1zM725 345h1v1h-1zM728 345h1v1h-1zM731 345h1v1h-1zM734 345h1v1h-1zM44 382h1v1h-1zM47 382h1v1h-1zM50 382h1v1h-1zM53 382h1v1h-1zM56 382h1v1h-1zM59 382h1v1h-1zM62 382h1v1h-1zM65 382h1v1h-1zM68 382h1v1h-1zM71 382h1v1h-1zM74 382h1v1h-1zM77 382h1v1h-1zM80 382h1v1h-1zM83 382h1v1h-1zM86 382h1v1h-1zM89 382h1v1h-1zM92 382h1v1h-1zM95 382h1v1h-1zM98 382h1v1h-1zM101 382h1v1h-1zM104 382h1v1h-1zM107 382h1v1h-1zM110 382h1v1h-1zM113 382h1v1h-1zM116 382h1v1h-1zM121 382h1v1h-1zM124 382h1v1h-1zM127 382h1v1h-1zM130 382h1v1h-1zM133 382h1v1h-1zM136 382h1v1h-1zM139 382h1v1h-1zM142 382h1v1h-1zM145 382h1v1h-1zM148 382h1v1h-1zM151 382h1v1h-1zM154 382h1v1h-1zM157 382h1v1h-1zM160 382h1v1h-1zM163 382h1v1h-1zM166 382h1v1h-1zM169 382h1v1h-1zM172 382h1v1h-1zM175 382h1v1h-1zM178 382h1v1h-1zM181 382h1v1h-1zM184 382h1v1h-1zM187 382h1v1h-1zM190 382h1v1h-1zM193 382h1v1h-1zM198 382h1v1h-1zM201 382h1v1h-1zM204 382h1v1h-1zM207 382h1v1h-1zM210 382h1v1h-1zM213 382h1v1h-1zM216 382h1v1h-1zM219 382h1v1h-1zM222 382h1v1h-1zM225 382h1v1h-1zM228 382h1v1h-1zM231 382h1v1h-1zM234 382h1v1h-1zM237 382h1v1h-1zM240 382h1v1h-1zM243 382h1v1h-1zM246 382h1v1h-1zM249 382h1v1h-1zM252 382h1v1h-1zM255 382h1v1h-1zM258 382h1v1h-1zM261 382h1v1h-1zM264 382h1v1h-1zM267 382h1v1h-1zM270 382h1v1h-1zM276 382h1v1h-1zM279 382h1v1h-1zM282 382h1v1h-1zM285 382h1v1h-1zM288 382h1v1h-1zM291 382h1v1h-1zM294 382h1v1h-1zM297 382h1v1h-1zM300 382h1v1h-1zM303 382h1v1h-1zM306 382h1v1h-1zM309 382h1v1h-1zM312 382h1v1h-1zM315 382h1v1h-1zM318 382h1v1h-1zM321 382h1v1h-1zM324 382h1v1h-1zM327 382h1v1h-1zM330 382h1v1h-1zM333 382h1v1h-1zM336 382h1v1h-1zM339 382h1v1h-1zM342 382h1v1h-1zM345 382h1v1h-1zM348 382h1v1h-1zM353 382h1v1h-1zM356 382h1v1h-1zM359 382h1v1h-1zM362 382h1v1h-1zM365 382h1v1h-1zM368 382h1v1h-1zM371 382h1v1h-1zM374 382h1v1h-1zM377 382h1v1h-1zM380 382h1v1h-1zM383 382h1v1h-1zM386 382h1v1h-1zM389 382h1v1h-1zM392 382h1v1h-1zM395 382h1v1h-1zM398 382h1v1h-1zM401 382h1v1h-1zM404 382h1v1h-1zM407 382h1v1h-1zM410 382h1v1h-1zM413 382h1v1h-1zM416 382h1v1h-1zM419 382h1v1h-1zM422 382h1v1h-1zM425 382h1v1h-1zM430 382h1v1h-1zM433 382h1v1h-1zM436 382h1v1h-1zM439 382h1v1h-1zM442 382h1v1h-1zM445 382h1v1h-1zM448 382h1v1h-1zM451 382h1v1h-1zM454 382h1v1h-1zM457 382h1v1h-1zM460 382h1v1h-1zM463 382h1v1h-1zM466 382h1v1h-1zM469 382h1v1h-1zM472 382h1v1h-1zM475 382h1v1h-1zM478 382h1v1h-1zM481 382h1v1h-1zM484 382h1v1h-1zM487 382h1v1h-1zM490 382h1v1h-1zM493 382h1v1h-1zM496 382h1v1h-1zM499 382h1v1h-1zM502 382h1v1h-1zM508 382h1v1h-1zM511 382h1v1h-1zM514 382h1v1h-1zM517 382h1v1h-1zM520 382h1v1h-1zM523 382h1v1h-1zM526 382h1v1h-1zM529 382h1v1h-1zM532 382h1v1h-1zM535 382h1v1h-1zM538 382h1v1h-1zM541 382h1v1h-1zM544 382h1v1h-1zM547 382h1v1h-1zM550 382h1v1h-1zM553 382h1v1h-1zM556 382h1v1h-1zM559 382h1v1h-1zM562 382h1v1h-1zM565 382h1v1h-1zM568 382h1v1h-1zM571 382h1v1h-1zM574 382h1v1h-1zM577 382h1v1h-1zM580 382h1v1h-1zM585 382h1v1h-1zM588 382h1v1h-1zM591 382h1v1h-1zM594 382h1v1h-1zM597 382h1v1h-1zM600 382h1v1h-1zM603 382h1v1h-1zM606 382h1v1h-1zM609 382h1v1h-1zM612 382h1v1h-1zM615 382h1v1h-1zM618 382h1v1h-1zM621 382h1v1h-1zM624 382h1v1h-1zM627 382h1v1h-1zM630 382h1v1h-1zM633 382h1v1h-1zM636 382h1v1h-1zM639 382h1v1h-1zM642 382h1v1h-1zM645 382h1v1h-1zM648 382h1v1h-1zM651 382h1v1h-1zM654 382h1v1h-1zM657 382h1v1h-1zM662 382h1v1h-1zM665 382h1v1h-1zM668 382h1v1h-1zM671 382h1v1h-1zM674 382h1v1h-1zM677 382h1v1h-1zM680 382h1v1h-1zM683 382h1v1h-1zM686 382h1v1h-1zM689 382h1v1h-1zM692 382h1v1h-1zM695 382h1v1h-1zM698 382h1v1h-1zM701 382h1v1h-1zM704 382h1v1h-1zM707 382h1v1h-1zM710 382h1v1h-1zM713 382h1v1h-1zM716 382h1v1h-1zM719 382h1v1h-1zM722 382h1v1h-1zM725 382h1v1h-1zM728 382h1v1h-1zM731 382h1v1h-1zM734 382h1v1h-1zM44 419h1v1h-1zM47 419h1v1h-1zM50 419h1v1h-1zM53 419h1v1h-1zM56 419h1v1h-1zM59 419h1v1h-1zM62 419h1v1h-1zM65 419h1v1h-1zM68 419h1v1h-1zM71 419h1v1h-1zM74 419h1v1h-1zM77 419h1v1h-1zM80 419h1v1h-1zM83 419h1v1h-1zM86 419h1v1h-1zM89 419h1v1h-1zM92 419h1v1h-1zM95 419h1v1h-1zM98 419h1v1h-1zM101 419h1v1h-1zM104 419h1v1h-1zM107 419h1v1h-1zM110 419h1v1h-1zM113 419h1v1h-1zM116 419h1v1h-1zM121 419h1v1h-1zM124 419h1v1h-1zM127 419h1v1h-1zM130 419h1v1h-1zM133 419h1v1h-1zM136 419h1v1h-1zM139 419h1v1h-1zM142 419h1v1h-1zM145 419h1v1h-1zM148 419h1v1h-1zM151 419h1v1h-1zM154 419h1v1h-1zM157 419h1v1h-1zM160 419h1v1h-1zM163 419h1v1h-1zM166 419h1v1h-1zM169 419h1v1h-1zM172 419h1v1h-1zM175 419h1v1h-1zM178 419h1v1h-1zM181 419h1v1h-1zM184 419h1v1h-1zM187 419h1v1h-1zM190 419h1v1h-1zM193 419h1v1h-1zM198 419h1v1h-1zM201 419h1v1h-1zM204 419h1v1h-1zM207 419h1v1h-1zM210 419h1v1h-1zM213 419h1v1h-1zM216 419h1v1h-1zM219 419h1v1h-1zM222 419h1v1h-1zM225 419h1v1h-1zM228 419h1v1h-1zM231 419h1v1h-1zM234 419h1v1h-1zM237 419h1v1h-1zM240 419h1v1h-1zM243 419h1v1h-1zM246 419h1v1h-1zM249 419h1v1h-1zM252 419h1v1h-1zM255 419h1v1h-1zM258 419h1v1h-1zM261 419h1v1h-1zM264 419h1v1h-1zM267 419h1v1h-1zM270 419h1v1h-1zM276 419h1v1h-1zM279 419h1v1h-1zM282 419h1v1h-1zM285 419h1v1h-1zM288 419h1v1h-1zM291 419h1v1h-1zM294 419h1v1h-1zM297 419h1v1h-1zM300 419h1v1h-1zM303 419h1v1h-1zM306 419h1v1h-1zM309 419h1v1h-1zM312 419h1v1h-1zM315 419h1v1h-1zM318 419h1v1h-1zM321 419h1v1h-1zM324 419h1v1h-1zM327 419h1v1h-1zM330 419h1v1h-1zM333 419h1v1h-1zM336 419h1v1h-1zM339 419h1v1h-1zM342 419h1v1h-1zM345 419h1v1h-1zM348 419h1v1h-1zM353 419h1v1h-1zM356 419h1v1h-1zM359 419h1v1h-1zM362 419h1v1h-1zM365 419h1v1h-1zM368 419h1v1h-1zM371 419h1v1h-1zM374 419h1v1h-1zM377 419h1v1h-1zM380 419h1v1h-1zM383 419h1v1h-1zM386 419h1v1h-1zM389 419h1v1h-1zM392 419h1v1h-1zM395 419h1v1h-1zM398 419h1v1h-1zM401 419h1v1h-1zM404 419h1v1h-1zM407 419h1v1h-1zM410 419h1v1h-1zM413 419h1v1h-1zM416 419h1v1h-1zM419 419h1v1h-1zM422 419h1v1h-1zM425 419h1v1h-1zM430 419h1v1h-1zM433 419h1v1h-1zM436 419h1v1h-1zM439 419h1v1h-1zM442 419h1v1h-1zM445 419h1v1h-1zM448 419h1v1h-1zM451 419h1v1h-1zM454 419h1v1h-1zM457 419h1v1h-1zM460 419h1v1h-1zM463 419h1v1h-1zM466 419h1v1h-1zM469 419h1v1h-1zM472 419h1v1h-1zM475 419h1v1h-1zM478 419h1v1h-1zM481 419h1v1h-1zM484 419h1v1h-1zM487 419h1v1h-1zM490 419h1v1h-1zM493 419h1v1h-1zM496 419h1v1h-1zM499 419h1v1h-1zM502 419h1v1h-1zM508 419h1v1h-1zM511 419h1v1h-1zM514 419h1v1h-1zM517 419h1v1h-1zM520 419h1v1h-1zM523 419h1v1h-1zM526 419h1v1h-1zM529 419h1v1h-1zM532 419h1v1h-1zM535 419h1v1h-1zM538 419h1v1h-1zM541 419h1v1h-1zM544 419h1v1h-1zM547 419h1v1h-1zM550 419h1v1h-1zM553 419h1v1h-1zM556 419h1v1h-1zM559 419h1v1h-1zM562 419h1v1h-1zM565 419h1v1h-1zM568 419h1v1h-1zM571 419h1v1h-1zM574 419h1v1h-1zM577 419h1v1h-1zM580 419h1v1h-1zM585 419h1v1h-1zM588 419h1v1h-1zM591 419h1v1h-1zM594 419h1v1h-1zM597 419h1v1h-1zM600 419h1v1h-1zM603 419h1v1h-1zM606 419h1v1h-1zM609 419h1v1h-1zM612 419h1v1h-1zM615 419h1v1h-1zM618 419h1v1h-1zM621 419h1v1h-1zM624 419h1v1h-1zM627 419h1v1h-1zM630 419h1v1h-1zM633 419h1v1h-1zM636 419h1v1h-1zM639 419h1v1h-1zM642 419h1v1h-1zM645 419h1v1h-1zM648 419h1v1h-1zM651 419h1v1h-1zM654 419h1v1h-1zM657 419h1v1h-1zM662 419h1v1h-1zM665 419h1v1h-1zM668 419h1v1h-1zM671 419h1v1h-1zM674 419h1v1h-1zM677 419h1v1h-1zM680 419h1v1h-1zM683 419h1v1h-1zM686 419h1v1h-1zM689 419h1v1h-1zM692 419h1v1h-1zM695 419h1v1h-1zM698 419h1v1h-1zM701 419h1v1h-1zM704 419h1v1h-1zM707 419h1v1h-1zM710 419h1v1h-1zM713 419h1v1h-1zM716 419h1v1h-1zM719 419h1v1h-1zM722 419h1v1h-1zM725 419h1v1h-1zM728 419h1v1h-1zM731 419h1v1h-1zM734 419h1v1h-1zM44 455h1v1h-1zM47 455h1v1h-1zM50 455h1v1h-1zM53 455h1v1h-1zM56 455h1v1h-1zM59 455h1v1h-1zM62 455h1v1h-1zM65 455h1v1h-1zM68 455h1v1h-1zM71 455h1v1h-1zM74 455h1v1h-1zM77 455h1v1h-1zM80 455h1v1h-1zM83 455h1v1h-1zM86 455h1v1h-1zM89 455h1v1h-1zM92 455h1v1h-1zM95 455h1v1h-1zM98 455h1v1h-1zM101 455h1v1h-1zM104 455h1v1h-1zM107 455h1v1h-1zM110 455h1v1h-1zM113 455h1v1h-1zM116 455h1v1h-1zM121 455h1v1h-1zM124 455h1v1h-1zM127 455h1v1h-1zM130 455h1v1h-1zM133 455h1v1h-1zM136 455h1v1h-1zM139 455h1v1h-1zM142 455h1v1h-1zM145 455h1v1h-1zM148 455h1v1h-1zM151 455h1v1h-1zM154 455h1v1h-1zM157 455h1v1h-1zM160 455h1v1h-1zM163 455h1v1h-1zM166 455h1v1h-1zM169 455h1v1h-1zM172 455h1v1h-1zM175 455h1v1h-1zM178 455h1v1h-1zM181 455h1v1h-1zM184 455h1v1h-1zM187 455h1v1h-1zM190 455h1v1h-1zM193 455h1v1h-1zM198 455h1v1h-1zM201 455h1v1h-1zM204 455h1v1h-1zM207 455h1v1h-1zM210 455h1v1h-1zM213 455h1v1h-1zM216 455h1v1h-1zM219 455h1v1h-1zM222 455h1v1h-1zM225 455h1v1h-1zM228 455h1v1h-1zM231 455h1v1h-1zM234 455h1v1h-1zM237 455h1v1h-1zM240 455h1v1h-1zM243 455h1v1h-1zM246 455h1v1h-1zM249 455h1v1h-1zM252 455h1v1h-1zM255 455h1v1h-1zM258 455h1v1h-1zM261 455h1v1h-1zM264 455h1v1h-1zM267 455h1v1h-1zM270 455h1v1h-1zM276 455h1v1h-1zM279 455h1v1h-1zM282 455h1v1h-1zM285 455h1v1h-1zM288 455h1v1h-1zM291 455h1v1h-1zM294 455h1v1h-1zM297 455h1v1h-1zM300 455h1v1h-1zM303 455h1v1h-1zM306 455h1v1h-1zM309 455h1v1h-1zM312 455h1v1h-1zM315 455h1v1h-1zM318 455h1v1h-1zM321 455h1v1h-1zM324 455h1v1h-1zM327 455h1v1h-1zM330 455h1v1h-1zM333 455h1v1h-1zM336 455h1v1h-1zM339 455h1v1h-1zM342 455h1v1h-1zM345 455h1v1h-1zM348 455h1v1h-1zM353 455h1v1h-1zM356 455h1v1h-1zM359 455h1v1h-1zM362 455h1v1h-1zM365 455h1v1h-1zM368 455h1v1h-1zM371 455h1v1h-1zM374 455h1v1h-1zM377 455h1v1h-1zM380 455h1v1h-1zM383 455h1v1h-1zM386 455h1v1h-1zM389 455h1v1h-1zM392 455h1v1h-1zM395 455h1v1h-1zM398 455h1v1h-1zM401 455h1v1h-1zM404 455h1v1h-1zM407 455h1v1h-1zM410 455h1v1h-1zM413 455h1v1h-1zM416 455h1v1h-1zM419 455h1v1h-1zM422 455h1v1h-1zM425 455h1v1h-1zM430 455h1v1h-1zM433 455h1v1h-1zM436 455h1v1h-1zM439 455h1v1h-1zM442 455h1v1h-1zM445 455h1v1h-1zM448 455h1v1h-1zM451 455h1v1h-1zM454 455h1v1h-1zM457 455h1v1h-1zM460 455h1v1h-1zM463 455h1v1h-1zM466 455h1v1h-1zM469 455h1v1h-1zM472 455h1v1h-1zM475 455h1v1h-1zM478 455h1v1h-1zM481 455h1v1h-1zM484 455h1v1h-1zM487 455h1v1h-1zM490 455h1v1h-1zM493 455h1v1h-1zM496 455h1v1h-1zM499 455h1v1h-1zM502 455h1v1h-1zM508 455h1v1h-1zM511 455h1v1h-1zM514 455h1v1h-1zM517 455h1v1h-1zM520 455h1v1h-1zM523 455h1v1h-1zM526 455h1v1h-1zM529 455h1v1h-1zM532 455h1v1h-1zM535 455h1v1h-1zM538 455h1v1h-1zM541 455h1v1h-1zM544 455h1v1h-1zM547 455h1v1h-1zM550 455h1v1h-1zM553 455h1v1h-1zM556 455h1v1h-1zM559 455h1v1h-1zM562 455h1v1h-1zM565 455h1v1h-1zM568 455h1v1h-1zM571 455h1v1h-1zM574 455h1v1h-1zM577 455h1v1h-1zM580 455h1v1h-1zM585 455h1v1h-1zM588 455h1v1h-1zM591 455h1v1h-1zM594 455h1v1h-1zM597 455h1v1h-1zM600 455h1v1h-1zM603 455h1v1h-1zM606 455h1v1h-1zM609 455h1v1h-1zM612 455h1v1h-1zM615 455h1v1h-1zM618 455h1v1h-1zM621 455h1v1h-1zM624 455h1v1h-1zM627 455h1v1h-1zM630 455h1v1h-1zM633 455h1v1h-1zM636 455h1v1h-1zM639 455h1v1h-1zM642 455h1v1h-1zM645 455h1v1h-1zM648 455h1v1h-1zM651 455h1v1h-1zM654 455h1v1h-1zM657 455h1v1h-1zM662 455h1v1h-1zM665 455h1v1h-1zM668 455h1v1h-1zM671 455h1v1h-1zM674 455h1v1h-1zM677 455h1v1h-1zM680 455h1v1h-1zM683 455h1v1h-1zM686 455h1v1h-1zM689 455h1v1h-1zM692 455h1v1h-1zM695 455h1v1h-1zM698 455h1v1h-1zM701 455h1v1h-1zM704 455h1v1h-1zM707 455h1v1h-1zM710 455h1v1h-1zM713 455h1v1h-1zM716 455h1v1h-1zM719 455h1v1h-1zM722 455h1v1h-1zM725 455h1v1h-1zM728 455h1v1h-1zM731 455h1v1h-1zM734 455h1v1h-1zM44 492h1v1h-1zM47 492h1v1h-1zM50 492h1v1h-1zM53 492h1v1h-1zM56 492h1v1h-1zM59 492h1v1h-1zM62 492h1v1h-1zM65 492h1v1h-1zM68 492h1v1h-1zM71 492h1v1h-1zM74 492h1v1h-1zM77 492h1v1h-1zM80 492h1v1h-1zM83 492h1v1h-1zM86 492h1v1h-1zM89 492h1v1h-1zM92 492h1v1h-1zM95 492h1v1h-1zM98 492h1v1h-1zM101 492h1v1h-1zM104 492h1v1h-1zM107 492h1v1h-1zM110 492h1v1h-1zM113 492h1v1h-1zM116 492h1v1h-1zM121 492h1v1h-1zM124 492h1v1h-1zM127 492h1v1h-1zM130 492h1v1h-1zM133 492h1v1h-1zM136 492h1v1h-1zM139 492h1v1h-1zM142 492h1v1h-1zM145 492h1v1h-1zM148 492h1v1h-1zM151 492h1v1h-1zM154 492h1v1h-1zM157 492h1v1h-1zM160 492h1v1h-1zM163 492h1v1h-1zM166 492h1v1h-1zM169 492h1v1h-1zM172 492h1v1h-1zM175 492h1v1h-1zM178 492h1v1h-1zM181 492h1v1h-1zM184 492h1v1h-1zM187 492h1v1h-1zM190 492h1v1h-1zM193 492h1v1h-1zM198 492h1v1h-1zM201 492h1v1h-1zM204 492h1v1h-1zM207 492h1v1h-1zM210 492h1v1h-1zM213 492h1v1h-1zM216 492h1v1h-1zM219 492h1v1h-1zM222 492h1v1h-1zM225 492h1v1h-1zM228 492h1v1h-1zM231 492h1v1h-1zM234 492h1v1h-1zM237 492h1v1h-1zM240 492h1v1h-1zM243 492h1v1h-1zM246 492h1v1h-1zM249 492h1v1h-1zM252 492h1v1h-1zM255 492h1v1h-1zM258 492h1v1h-1zM261 492h1v1h-1zM264 492h1v1h-1zM267 492h1v1h-1zM270 492h1v1h-1zM276 492h1v1h-1zM279 492h1v1h-1zM282 492h1v1h-1zM285 492h1v1h-1zM288 492h1v1h-1zM291 492h1v1h-1zM294 492h1v1h-1zM297 492h1v1h-1zM300 492h1v1h-1zM303 492h1v1h-1zM306 492h1v1h-1zM309 492h1v1h-1zM312 492h1v1h-1zM315 492h1v1h-1zM318 492h1v1h-1zM321 492h1v1h-1zM324 492h1v1h-1zM327 492h1v1h-1zM330 492h1v1h-1zM333 492h1v1h-1zM336 492h1v1h-1zM339 492h1v1h-1zM342 492h1v1h-1zM345 492h1v1h-1zM348 492h1v1h-1zM353 492h1v1h-1zM356 492h1v1h-1zM359 492h1v1h-1zM362 492h1v1h-1zM365 492h1v1h-1zM368 492h1v1h-1zM371 492h1v1h-1zM374 492h1v1h-1zM377 492h1v1h-1zM380 492h1v1h-1zM383 492h1v1h-1zM386 492h1v1h-1zM389 492h1v1h-1zM392 492h1v1h-1zM395 492h1v1h-1zM398 492h1v1h-1zM401 492h1v1h-1zM404 492h1v1h-1zM407 492h1v1h-1zM410 492h1v1h-1zM413 492h1v1h-1zM416 492h1v1h-1zM419 492h1v1h-1zM422 492h1v1h-1zM425 492h1v1h-1zM430 492h1v1h-1zM433 492h1v1h-1zM436 492h1v1h-1zM439 492h1v1h-1zM442 492h1v1h-1zM445 492h1v1h-1zM448 492h1v1h-1zM451 492h1v1h-1zM454 492h1v1h-1zM457 492h1v1h-1zM460 492h1v1h-1zM463 492h1v1h-1zM466 492h1v1h-1zM469 492h1v1h-1zM472 492h1v1h-1zM475 492h1v1h-1zM478 492h1v1h-1zM481 492h1v1h-1zM484 492h1v1h-1zM487 492h1v1h-1zM490 492h1v1h-1zM493 492h1v1h-1zM496 492h1v1h-1zM499 492h1v1h-1zM502 492h1v1h-1zM508 492h1v1h-1zM511 492h1v1h-1zM514 492h1v1h-1zM517 492h1v1h-1zM520 492h1v1h-1zM523 492h1v1h-1zM526 492h1v1h-1zM529 492h1v1h-1zM532 492h1v1h-1zM535 492h1v1h-1zM538 492h1v1h-1zM541 492h1v1h-1zM544 492h1v1h-1zM547 492h1v1h-1zM550 492h1v1h-1zM553 492h1v1h-1zM556 492h1v1h-1zM559 492h1v1h-1zM562 492h1v1h-1zM565 492h1v1h-1zM568 492h1v1h-1zM571 492h1v1h-1zM574 492h1v1h-1zM577 492h1v1h-1zM580 492h1v1h-1zM585 492h1v1h-1zM588 492h1v1h-1zM591 492h1v1h-1zM594 492h1v1h-1zM597 492h1v1h-1zM600 492h1v1h-1zM603 492h1v1h-1zM606 492h1v1h-1zM609 492h1v1h-1zM612 492h1v1h-1zM615 492h1v1h-1zM618 492h1v1h-1zM621 492h1v1h-1zM624 492h1v1h-1zM627 492h1v1h-1zM630 492h1v1h-1zM633 492h1v1h-1zM636 492h1v1h-1zM639 492h1v1h-1zM642 492h1v1h-1zM645 492h1v1h-1zM648 492h1v1h-1zM651 492h1v1h-1zM654 492h1v1h-1zM657 492h1v1h-1zM662 492h1v1h-1zM665 492h1v1h-1zM668 492h1v1h-1zM671 492h1v1h-1zM674 492h1v1h-1zM677 492h1v1h-1zM680 492h1v1h-1zM683 492h1v1h-1zM686 492h1v1h-1zM689 492h1v1h-1zM692 492h1v1h-1zM695 492h1v1h-1zM698 492h1v1h-1zM701 492h1v1h-1zM704 492h1v1h-1zM707 492h1v1h-1zM710 492h1v1h-1zM713 492h1v1h-1zM716 492h1v1h-1zM719 492h1v1h-1zM722 492h1v1h-1zM725 492h1v1h-1zM728 492h1v1h-1zM731 492h1v1h-1zM734 492h1v1h-1z" fill="#4c4c4c"/><rect x="42" y="137" width="1" height="391" fill="#4a4a4a"/><rect x="118.00" y="137" width="4" height="391" fill="#fff" fill-opacity="0.45"/><rect x="119.00" y="137" width="2" height="391" fill="#3c3c3c"/><rect x="195.33" y="137" width="4" height="391" fill="#fff" fill-opacity="0.45"/><rect x="196.33" y="137" width="2" height="391" fill="#3c3c3c"/><rect x="272.67" y="137" width="4" height="391" fill="#fff" fill-opacity="0.45"/><rect x="273.67" y="137" width="2" height="391" fill="#3c3c3c"/><rect x="350.00" y="137" width="4" height="391" fill="#fff" fill-opacity="0.45"/><rect x="351.00" y="137" width="2" height="391" fill="#3c3c3c"/><rect x="427.33" y="137" width="4" height="391" fill="#fff" fill-opacity="0.45"/><rect x="428.33" y="137" width="2" height="391" fill="#3c3c3c"/><rect x="504.66" y="137" width="4" height="391" fill="#fff" fill-opacity="0.45"/><rect x="505.66" y="137" width="2" height="391" fill="#3c3c3c"/><rect x="582.00" y="137" width="4" height="391" fill="#fff" fill-opacity="0.45"/><rect x="583.00" y="137" width="2" height="391" fill="#3c3c3c"/><rect x="659.33" y="137" width="4" height="391" fill="#fff" fill-opacity="0.45"/><rect x="660.33" y="137" width="2" height="391" fill="#3c3c3c"/><rect x="738" y="137" width="1" height="391" fill="#6c6c6c"/><rect x="42" y="198" width="833" height="1" fill="#a0a0a0"/><rect x="10" y="198" width="32" height="1" fill="#d8d0c8"/><path d="M877.5 146.8 L879.5 143.8 L881.5 146.8 Z" fill="#b8b8b8"/><rect x="876.5" y="153.5" width="6" height="45" rx="3" fill="#9b9b9b"/><rect x="876.5" y="196" width="6" height="315" rx="3" fill="#dadada"/><rect x="876.5" y="153.5" width="6" height="45" rx="3" fill="#9b9b9b"/><path d="M877.3 518.6 L881.7 518.6 L879.5 521.6 Z" fill="#3a3a3a"/><rect x="9.5" y="136.5" width="875" height="392" fill="none" stroke="#b2b2b2" stroke-width="1"/></svg>
<svg class="a" style="left:0;top:0" width="900" height="560" viewBox="0 0 900 560" text-rendering="geometricPrecision" font-family='"Liberation Sans", sans-serif'><text x="96.50" y="20.30" font-size="14.3" fill="#111111" textLength="118.5" lengthAdjust="spacingAndGlyphs" stroke="#111111" stroke-width="0.25">Шахматка сеансов</text><text x="12.80" y="44.70" font-size="10.5" fill="#2d2d2d" textLength="102.5" lengthAdjust="spacingAndGlyphs">08.12.2025 - 16.12.2025</text><text x="160.30" y="44.70" font-size="10.5" fill="#2d2d2d" textLength="61.7" lengthAdjust="spacingAndGlyphs">106 - Фитобар</text><text x="230.80" y="44.70" font-size="10.5" fill="#bcbcbc" textLength="41.4" lengthAdjust="spacingAndGlyphs">Кабинеты</text><text x="475.30" y="44.70" font-size="10.5" fill="#2d2d2d" textLength="108.5" lengthAdjust="spacingAndGlyphs">Фитобар - оборудование</text><text x="593.00" y="44.70" font-size="10.5" fill="#bcbcbc" textLength="64.5" lengthAdjust="spacingAndGlyphs">Оборудование</text><text x="803.60" y="44.60" font-size="10.5" fill="#454545" textLength="41.3" lengthAdjust="spacingAndGlyphs">Обновить</text><text x="874.00" y="45.00" font-size="11.5" fill="#222" text-anchor="middle" font-weight="bold">?</text><text x="12.50" y="70.50" font-size="10.5" fill="#b9b9b9" textLength="36" lengthAdjust="spacingAndGlyphs">Пациент</text><text x="175.50" y="70.50" font-size="10.5" fill="#b9b9b9" textLength="47" lengthAdjust="spacingAndGlyphs">Контрагент</text><text x="338.50" y="70.50" font-size="10.5" fill="#b9b9b9" textLength="36" lengthAdjust="spacingAndGlyphs">Договор</text><text x="486.40" y="72.60" font-size="12.4" fill="#1e9c55" textLength="59.6" lengthAdjust="spacingAndGlyphs">Сеансы (0)</text><rect x="486.40" y="74.00" width="59.6" height="1" fill="#1e9c55"/><text x="654.40" y="72.30" font-size="10.5" fill="#9b9a88" font-weight="bold" textLength="51.2" lengthAdjust="spacingAndGlyphs">Назначить</text><text x="761.80" y="72.40" font-size="10.5" fill="#3a3a3a" textLength="111" lengthAdjust="spacingAndGlyphs">Отметить без назначения</text><text x="12.80" y="95.60" font-size="10.5" fill="#2d2d2d" textLength="37" lengthAdjust="spacingAndGlyphs">Фиточай</text><text x="175.50" y="95.60" font-size="10.5" fill="#b9b9b9" textLength="102" lengthAdjust="spacingAndGlyphs">Параметры назначения</text><text x="338.80" y="95.60" font-size="10.5" fill="#2d2d2d" textLength="59.5" lengthAdjust="spacingAndGlyphs">Каждый день</text><text x="485.10" y="97.60" font-size="10.5" fill="#444" textLength="24.4" lengthAdjust="spacingAndGlyphs">Мест:</text><text x="532.80" y="97.60" font-size="10.5" fill="#2d2d2d" text-anchor="end">1</text><text x="544.50" y="97.60" font-size="10.5" fill="#444" textLength="37.7" lengthAdjust="spacingAndGlyphs">Платная:</text><text x="606.70" y="97.60" font-size="10.5" fill="#444" textLength="71.1" lengthAdjust="spacingAndGlyphs">Срочная (CITO):</text><text x="830.00" y="97.60" font-size="10.5" fill="#444" textLength="41" lengthAdjust="spacingAndGlyphs">Действия</text><text x="12.20" y="123.70" font-size="10.5" fill="#bcbcbc" textLength="106.2" lengthAdjust="spacingAndGlyphs">Комментарий к сеансам</text><text x="81.25" y="146.10" font-size="9.5" fill="#2e2e2e" text-anchor="middle" textLength="54" lengthAdjust="spacingAndGlyphs" stroke="#2e2e2e" stroke-width="0.1">08.12.25, Пн</text><text x="81.25" y="158.90" font-size="9.5" fill="#2e2e2e" text-anchor="middle" textLength="61" lengthAdjust="spacingAndGlyphs" stroke="#2e2e2e" stroke-width="0.1">106 - Фитобар</text><text x="81.25" y="170.90" font-size="9.5" fill="#2e2e2e" text-anchor="middle" textLength="43.4" lengthAdjust="spacingAndGlyphs" stroke="#2e2e2e" stroke-width="0.1">Фитобар -</text><text x="81.25" y="183.10" font-size="9.5" fill="#2e2e2e" text-anchor="middle" textLength="62.4" lengthAdjust="spacingAndGlyphs" stroke="#2e2e2e" stroke-width="0.1">оборудование</text><text x="81.25" y="195.50" font-size="9.5" fill="#2e2e2e" text-anchor="middle" stroke="#2e2e2e" stroke-width="0.1">4</text><text x="158.67" y="146.10" font-size="9.5" fill="#2e2e2e" text-anchor="middle" textLength="54" lengthAdjust="spacingAndGlyphs" stroke="#2e2e2e" stroke-width="0.1">09.12.25, Вт</text><text x="158.67" y="158.90" font-size="9.5" fill="#2e2e2e" text-anchor="middle" textLength="61" lengthAdjust="spacingAndGlyphs" stroke="#2e2e2e" stroke-width="0.1">106 - Фитобар</text><text x="158.67" y="170.90" font-size="9.5" fill="#2e2e2e" text-anchor="middle" textLength="43.4" lengthAdjust="spacingAndGlyphs" stroke="#2e2e2e" stroke-width="0.1">Фитобар -</text><text x="158.67" y="183.10" font-size="9.5" fill="#2e2e2e" text-anchor="middle" textLength="62.4" lengthAdjust="spacingAndGlyphs" stroke="#2e2e2e" stroke-width="0.1">оборудование</text><text x="158.67" y="195.50" font-size="9.5" fill="#2e2e2e" text-anchor="middle" stroke="#2e2e2e" stroke-width="0.1">4</text><text x="236.00" y="146.10" font-size="9.5" fill="#2e2e2e" text-anchor="middle" textLength="54" lengthAdjust="spacingAndGlyphs" stroke="#2e2e2e" stroke-width="0.1">10.12.25, Ср</text><text x="236.00" y="158.90" font-size="9.5" fill="#2e2e2e" text-anchor="middle" textLength="61" lengthAdjust="spacingAndGlyphs" stroke="#2e2e2e" stroke-width="0.1">106 - Фитобар</text><text x="236.00" y="170.90" font-size="9.5" fill="#2e2e2e" text-anchor="middle" textLength="43.4" lengthAdjust="spacingAndGlyphs" stroke="#2e2e2e" stroke-width="0.1">Фитобар -</text><text x="236.00" y="183.10" font-size="9.5" fill="#2e2e2e" text-anchor="middle" textLength="62.4" lengthAdjust="spacingAndGlyphs" stroke="#2e2e2e" stroke-width="0.1">оборудование</text><text x="236.00" y="195.50" font-size="9.5" fill="#2e2e2e" text-anchor="middle" stroke="#2e2e2e" stroke-width="0.1">4</text><text x="313.33" y="146.10" font-size="9.5" fill="#2e2e2e" text-anchor="middle" textLength="54" lengthAdjust="spacingAndGlyphs" stroke="#2e2e2e" stroke-width="0.1">11.12.25, Чт</text><text x="313.33" y="158.90" font-size="9.5" fill="#2e2e2e" text-anchor="middle" textLength="61" lengthAdjust="spacingAndGlyphs" stroke="#2e2e2e" stroke-width="0.1">106 - Фитобар</text><text x="313.33" y="170.90" font-size="9.5" fill="#2e2e2e" text-anchor="middle" textLength="43.4" lengthAdjust="spacingAndGlyphs" stroke="#2e2e2e" stroke-width="0.1">Фитобар -</text><text x="313.33" y="183.10" font-size="9.5" fill="#2e2e2e" text-anchor="middle" textLength="62.4" lengthAdjust="spacingAndGlyphs" stroke="#2e2e2e" stroke-width="0.1">оборудование</text><text x="313.33" y="195.50" font-size="9.5" fill="#2e2e2e" text-anchor="middle" stroke="#2e2e2e" stroke-width="0.1">4</text><text x="390.67" y="146.10" font-size="9.5" fill="#2e2e2e" text-anchor="middle" textLength="54" lengthAdjust="spacingAndGlyphs" stroke="#2e2e2e" stroke-width="0.1">12.12.25, Пт</text><text x="390.67" y="158.90" font-size="9.5" fill="#2e2e2e" text-anchor="middle" textLength="61" lengthAdjust="spacingAndGlyphs" stroke="#2e2e2e" stroke-width="0.1">106 - Фитобар</text><text x="390.67" y="170.90" font-size="9.5" fill="#2e2e2e" text-anchor="middle" textLength="43.4" lengthAdjust="spacingAndGlyphs" stroke="#2e2e2e" stroke-width="0.1">Фитобар -</text><text x="390.67" y="183.10" font-size="9.5" fill="#2e2e2e" text-anchor="middle" textLength="62.4" lengthAdjust="spacingAndGlyphs" stroke="#2e2e2e" stroke-width="0.1">оборудование</text><text x="390.67" y="195.50" font-size="9.5" fill="#2e2e2e" text-anchor="middle" stroke="#2e2e2e" stroke-width="0.1">4</text><text x="468.00" y="146.10" font-size="9.5" fill="#2e2e2e" text-anchor="middle" textLength="54" lengthAdjust="spacingAndGlyphs" stroke="#2e2e2e" stroke-width="0.1">13.12.25, Сб</text><text x="468.00" y="158.90" font-size="9.5" fill="#2e2e2e" text-anchor="middle" textLength="61" lengthAdjust="spacingAndGlyphs" stroke="#2e2e2e" stroke-width="0.1">106 - Фитобар</text><text x="468.00" y="170.90" font-size="9.5" fill="#2e2e2e" text-anchor="middle" textLength="43.4" lengthAdjust="spacingAndGlyphs" stroke="#2e2e2e" stroke-width="0.1">Фитобар -</text><text x="468.00" y="183.10" font-size="9.5" fill="#2e2e2e" text-anchor="middle" textLength="62.4" lengthAdjust="spacingAndGlyphs" stroke="#2e2e2e" stroke-width="0.1">оборудование</text><text x="468.00" y="195.50" font-size="9.5" fill="#2e2e2e" text-anchor="middle" stroke="#2e2e2e" stroke-width="0.1">4</text><text x="545.33" y="146.10" font-size="9.5" fill="#2e2e2e" text-anchor="middle" textLength="54" lengthAdjust="spacingAndGlyphs" stroke="#2e2e2e" stroke-width="0.1">14.12.25, Вс</text><text x="545.33" y="158.90" font-size="9.5" fill="#2e2e2e" text-anchor="middle" textLength="61" lengthAdjust="spacingAndGlyphs" stroke="#2e2e2e" stroke-width="0.1">106 - Фитобар</text><text x="545.33" y="170.90" font-size="9.5" fill="#2e2e2e" text-anchor="middle" textLength="43.4" lengthAdjust="spacingAndGlyphs" stroke="#2e2e2e" stroke-width="0.1">Фитобар -</text><text x="545.33" y="183.10" font-size="9.5" fill="#2e2e2e" text-anchor="middle" textLength="62.4" lengthAdjust="spacingAndGlyphs" stroke="#2e2e2e" stroke-width="0.1">оборудование</text><text x="545.33" y="195.50" font-size="9.5" fill="#2e2e2e" text-anchor="middle" stroke="#2e2e2e" stroke-width="0.1">4</text><text x="622.66" y="146.10" font-size="9.5" fill="#2e2e2e" text-anchor="middle" textLength="54" lengthAdjust="spacingAndGlyphs" stroke="#2e2e2e" stroke-width="0.1">15.12.25, Пн</text><text x="622.66" y="158.90" font-size="9.5" fill="#2e2e2e" text-anchor="middle" textLength="61" lengthAdjust="spacingAndGlyphs" stroke="#2e2e2e" stroke-width="0.1">106 - Фитобар</text><text x="622.66" y="170.90" font-size="9.5" fill="#2e2e2e" text-anchor="middle" textLength="43.4" lengthAdjust="spacingAndGlyphs" stroke="#2e2e2e" stroke-width="0.1">Фитобар -</text><text x="622.66" y="183.10" font-size="9.5" fill="#2e2e2e" text-anchor="middle" textLength="62.4" lengthAdjust="spacingAndGlyphs" stroke="#2e2e2e" stroke-width="0.1">оборудование</text><text x="622.66" y="195.50" font-size="9.5" fill="#2e2e2e" text-anchor="middle" stroke="#2e2e2e" stroke-width="0.1">4</text><text x="700.00" y="146.10" font-size="9.5" fill="#2e2e2e" text-anchor="middle" textLength="54" lengthAdjust="spacingAndGlyphs" stroke="#2e2e2e" stroke-width="0.1">16.12.25, Вт</text><text x="700.00" y="158.90" font-size="9.5" fill="#2e2e2e" text-anchor="middle" textLength="61" lengthAdjust="spacingAndGlyphs" stroke="#2e2e2e" stroke-width="0.1">106 - Фитобар</text><text x="700.00" y="170.90" font-size="9.5" fill="#2e2e2e" text-anchor="middle" textLength="43.4" lengthAdjust="spacingAndGlyphs" stroke="#2e2e2e" stroke-width="0.1">Фитобар -</text><text x="700.00" y="183.10" font-size="9.5" fill="#2e2e2e" text-anchor="middle" textLength="62.4" lengthAdjust="spacingAndGlyphs" stroke="#2e2e2e" stroke-width="0.1">оборудование</text><text x="700.00" y="195.50" font-size="9.5" fill="#2e2e2e" text-anchor="middle" stroke="#2e2e2e" stroke-width="0.1">4</text><text x="39.30" y="208.10" font-size="9.9" fill="#2e2e2e" text-anchor="end" textLength="22" lengthAdjust="spacingAndGlyphs" stroke="#2e2e2e" stroke-width="0.1">10:00</text><text x="39.30" y="244.90" font-size="9.9" fill="#2e2e2e" text-anchor="end" textLength="22" lengthAdjust="spacingAndGlyphs" stroke="#2e2e2e" stroke-width="0.1">10:10</text><text x="39.30" y="281.70" font-size="9.9" fill="#2e2e2e" text-anchor="end" textLength="22" lengthAdjust="spacingAndGlyphs" stroke="#2e2e2e" stroke-width="0.1">10:20</text><text x="39.30" y="318.50" font-size="9.9" fill="#2e2e2e" text-anchor="end" textLength="22" lengthAdjust="spacingAndGlyphs" stroke="#2e2e2e" stroke-width="0.1">10:30</text><text x="39.30" y="355.30" font-size="9.9" fill="#2e2e2e" text-anchor="end" textLength="22" lengthAdjust="spacingAndGlyphs" stroke="#2e2e2e" stroke-width="0.1">10:40</text><text x="39.30" y="392.10" font-size="9.9" fill="#2e2e2e" text-anchor="end" textLength="22" lengthAdjust="spacingAndGlyphs" stroke="#2e2e2e" stroke-width="0.1">10:50</text><text x="39.30" y="428.90" font-size="9.9" fill="#2e2e2e" text-anchor="end" textLength="22" lengthAdjust="spacingAndGlyphs" stroke="#2e2e2e" stroke-width="0.1">11:00</text><text x="39.30" y="465.70" font-size="9.9" fill="#2e2e2e" text-anchor="end" textLength="22" lengthAdjust="spacingAndGlyphs" stroke="#2e2e2e" stroke-width="0.1">11:10</text><text x="39.30" y="502.50" font-size="9.9" fill="#2e2e2e" text-anchor="end" textLength="22" lengthAdjust="spacingAndGlyphs" stroke="#2e2e2e" stroke-width="0.1">11:20</text><text x="116.60" y="207.80" font-size="9.9" fill="#2e2e2e" text-anchor="end" textLength="22.3" lengthAdjust="spacingAndGlyphs" stroke="#2e2e2e" stroke-width="0.1">10:00</text><text x="116.60" y="220.10" font-size="9.9" fill="#2e2e2e" text-anchor="end" textLength="24" lengthAdjust="spacingAndGlyphs" stroke="#2e2e2e" stroke-width="0.1">+3 / 4</text><text x="193.93" y="207.80" font-size="9.9" fill="#2e2e2e" text-anchor="end" textLength="22.3" lengthAdjust="spacingAndGlyphs" stroke="#2e2e2e" stroke-width="0.1">10:00</text><text x="193.93" y="220.10" font-size="9.9" fill="#2e2e2e" text-anchor="end" textLength="18.4" lengthAdjust="spacingAndGlyphs" stroke="#2e2e2e" stroke-width="0.1">0 / 4</text><text x="271.27" y="207.80" font-size="9.9" fill="#2e2e2e" text-anchor="end" textLength="22.3" lengthAdjust="spacingAndGlyphs" stroke="#2e2e2e" stroke-width="0.1">10:00</text><text x="271.27" y="220.10" font-size="9.9" fill="#2e2e2e" text-anchor="end" textLength="18.4" lengthAdjust="spacingAndGlyphs" stroke="#2e2e2e" stroke-width="0.1">0 / 4</text><text x="348.60" y="207.80" font-size="9.9" fill="#2e2e2e" text-anchor="end" textLength="22.3" lengthAdjust="spacingAndGlyphs" stroke="#2e2e2e" stroke-width="0.1">10:00</text><text x="348.60" y="220.10" font-size="9.9" fill="#2e2e2e" text-anchor="end" textLength="24" lengthAdjust="spacingAndGlyphs" stroke="#2e2e2e" stroke-width="0.1">+1 / 4</text><text x="425.93" y="207.80" font-size="9.9" fill="#2e2e2e" text-anchor="end" textLength="22.3" lengthAdjust="spacingAndGlyphs" stroke="#2e2e2e" stroke-width="0.1">10:00</text><text x="425.93" y="220.10" font-size="9.9" fill="#2e2e2e" text-anchor="end" textLength="24" lengthAdjust="spacingAndGlyphs" stroke="#2e2e2e" stroke-width="0.1">+1 / 4</text><text x="503.26" y="207.80" font-size="9.9" fill="#2e2e2e" text-anchor="end" textLength="22.3" lengthAdjust="spacingAndGlyphs" stroke="#2e2e2e" stroke-width="0.1">10:00</text><text x="503.26" y="220.10" font-size="9.9" fill="#2e2e2e" text-anchor="end" textLength="24" lengthAdjust="spacingAndGlyphs" stroke="#2e2e2e" stroke-width="0.1">+1 / 4</text><text x="580.60" y="207.80" font-size="9.9" fill="#2e2e2e" text-anchor="end" textLength="22.3" lengthAdjust="spacingAndGlyphs" stroke="#2e2e2e" stroke-width="0.1">10:00</text><text x="580.60" y="220.10" font-size="9.9" fill="#2e2e2e" text-anchor="end" textLength="24" lengthAdjust="spacingAndGlyphs" stroke="#2e2e2e" stroke-width="0.1">+1 / 4</text><text x="657.93" y="207.80" font-size="9.9" fill="#2e2e2e" text-anchor="end" textLength="22.3" lengthAdjust="spacingAndGlyphs" stroke="#2e2e2e" stroke-width="0.1">10:00</text><text x="657.93" y="220.10" font-size="9.9" fill="#2e2e2e" text-anchor="end" textLength="24" lengthAdjust="spacingAndGlyphs" stroke="#2e2e2e" stroke-width="0.1">+1 / 4</text><text x="735.26" y="207.80" font-size="9.9" fill="#bdbdbd" text-anchor="end" textLength="22.3" lengthAdjust="spacingAndGlyphs">10:00</text><text x="116.60" y="244.60" font-size="9.9" fill="#2e2e2e" text-anchor="end" textLength="22.3" lengthAdjust="spacingAndGlyphs" stroke="#2e2e2e" stroke-width="0.1">10:10</text><text x="116.60" y="256.90" font-size="9.9" fill="#2e2e2e" text-anchor="end" textLength="24" lengthAdjust="spacingAndGlyphs" stroke="#2e2e2e" stroke-width="0.1">+3 / 4</text><text x="193.93" y="244.60" font-size="9.9" fill="#2e2e2e" text-anchor="end" textLength="22.3" lengthAdjust="spacingAndGlyphs" stroke="#2e2e2e" stroke-width="0.1">10:10</text><text x="193.93" y="256.90" font-size="9.9" fill="#2e2e2e" text-anchor="end" textLength="18.4" lengthAdjust="spacingAndGlyphs" stroke="#2e2e2e" stroke-width="0.1">0 / 4</text><text x="271.27" y="244.60" font-size="9.9" fill="#2e2e2e" text-anchor="end" textLength="22.3" lengthAdjust="spacingAndGlyphs" stroke="#2e2e2e" stroke-width="0.1">10:10</text><text x="271.27" y="256.90" font-size="9.9" fill="#2e2e2e" text-anchor="end" textLength="18.4" lengthAdjust="spacingAndGlyphs" stroke="#2e2e2e" stroke-width="0.1">0 / 4</text><text x="348.60" y="244.60" font-size="9.9" fill="#2e2e2e" text-anchor="end" textLength="22.3" lengthAdjust="spacingAndGlyphs" stroke="#2e2e2e" stroke-width="0.1">10:10</text><text x="348.60" y="256.90" font-size="9.9" fill="#2e2e2e" text-anchor="end" textLength="18.4" lengthAdjust="spacingAndGlyphs" stroke="#2e2e2e" stroke-width="0.1">0 / 4</text><text x="425.93" y="244.60" font-size="9.9" fill="#2e2e2e" text-anchor="end" textLength="22.3" lengthAdjust="spacingAndGlyphs" stroke="#2e2e2e" stroke-width="0.1">10:10</text><text x="425.93" y="256.90" font-size="9.9" fill="#2e2e2e" text-anchor="end" textLength="18.4" lengthAdjust="spacingAndGlyphs" stroke="#2e2e2e" stroke-width="0.1">0 / 4</text><text x="503.26" y="244.60" font-size="9.9" fill="#2e2e2e" text-anchor="end" textLength="22.3" lengthAdjust="spacingAndGlyphs" stroke="#2e2e2e" stroke-width="0.1">10:10</text><text x="503.26" y="256.90" font-size="9.9" fill="#2e2e2e" text-anchor="end" textLength="18.4" lengthAdjust="spacingAndGlyphs" stroke="#2e2e2e" stroke-width="0.1">0 / 4</text><text x="580.60" y="244.60" font-size="9.9" fill="#2e2e2e" text-anchor="end" textLength="22.3" lengthAdjust="spacingAndGlyphs" stroke="#2e2e2e" stroke-width="0.1">10:10</text><text x="580.60" y="256.90" font-size="9.9" fill="#2e2e2e" text-anchor="end" textLength="24" lengthAdjust="spacingAndGlyphs" stroke="#2e2e2e" stroke-width="0.1">+1 / 4</text><text x="657.93" y="244.60" font-size="9.9" fill="#2e2e2e" text-anchor="end" textLength="22.3" lengthAdjust="spacingAndGlyphs" stroke="#2e2e2e" stroke-width="0.1">10:10</text><text x="657.93" y="256.90" font-size="9.9" fill="#2e2e2e" text-anchor="end" textLength="18.4" lengthAdjust="spacingAndGlyphs" stroke="#2e2e2e" stroke-width="0.1">0 / 4</text><text x="735.26" y="244.60" font-size="9.9" fill="#2e2e2e" text-anchor="end" textLength="22.3" lengthAdjust="spacingAndGlyphs" stroke="#2e2e2e" stroke-width="0.1">10:10</text><text x="735.26" y="256.90" font-size="9.9" fill="#2e2e2e" text-anchor="end" textLength="24" lengthAdjust="spacingAndGlyphs" stroke="#2e2e2e" stroke-width="0.1">+2 / 4</text><text x="116.60" y="281.40" font-size="9.9" fill="#bdbdbd" text-anchor="end" textLength="22.3" lengthAdjust="spacingAndGlyphs">10:20</text><text x="193.93" y="281.40" font-size="9.9" fill="#bdbdbd" text-anchor="end" textLength="22.3" lengthAdjust="spacingAndGlyphs">10:20</text><text x="271.27" y="281.40" font-size="9.9" fill="#bdbdbd" text-anchor="end" textLength="22.3" lengthAdjust="spacingAndGlyphs">10:20</text><text x="348.60" y="281.40" font-size="9.9" fill="#bdbdbd" text-anchor="end" textLength="22.3" lengthAdjust="spacingAndGlyphs">10:20</text><text x="425.93" y="281.40" font-size="9.9" fill="#bdbdbd" text-anchor="end" textLength="22.3" lengthAdjust="spacingAndGlyphs">10:20</text><text x="503.26" y="281.40" font-size="9.9" fill="#bdbdbd" text-anchor="end" textLength="22.3" lengthAdjust="spacingAndGlyphs">10:20</text><text x="580.60" y="281.40" font-size="9.9" fill="#bdbdbd" text-anchor="end" textLength="22.3" lengthAdjust="spacingAndGlyphs">10:20</text><text x="657.93" y="281.40" font-size="9.9" fill="#bdbdbd" text-anchor="end" textLength="22.3" lengthAdjust="spacingAndGlyphs">10:20</text><text x="735.26" y="281.40" font-size="9.9" fill="#bdbdbd" text-anchor="end" textLength="22.3" lengthAdjust="spacingAndGlyphs">10:20</text><text x="116.60" y="318.20" font-size="9.9" fill="#bdbdbd" text-anchor="end" textLength="22.3" lengthAdjust="spacingAndGlyphs">10:30</text><text x="193.93" y="318.20" font-size="9.9" fill="#bdbdbd" text-anchor="end" textLength="22.3" lengthAdjust="spacingAndGlyphs">10:30</text><text x="271.27" y="318.20" font-size="9.9" fill="#bdbdbd" text-anchor="end" textLength="22.3" lengthAdjust="spacingAndGlyphs">10:30</text><text x="348.60" y="318.20" font-size="9.9" fill="#bdbdbd" text-anchor="end" textLength="22.3" lengthAdjust="spacingAndGlyphs">10:30</text><text x="425.93" y="318.20" font-size="9.9" fill="#bdbdbd" text-anchor="end" textLength="22.3" lengthAdjust="spacingAndGlyphs">10:30</text><text x="503.26" y="318.20" font-size="9.9" fill="#bdbdbd" text-anchor="end" textLength="22.3" lengthAdjust="spacingAndGlyphs">10:30</text><text x="580.60" y="318.20" font-size="9.9" fill="#bdbdbd" text-anchor="end" textLength="22.3" lengthAdjust="spacingAndGlyphs">10:30</text><text x="657.93" y="318.20" font-size="9.9" fill="#bdbdbd" text-anchor="end" textLength="22.3" lengthAdjust="spacingAndGlyphs">10:30</text><text x="735.26" y="318.20" font-size="9.9" fill="#bdbdbd" text-anchor="end" textLength="22.3" lengthAdjust="spacingAndGlyphs">10:30</text><text x="116.60" y="355.00" font-size="9.9" fill="#bdbdbd" text-anchor="end" textLength="22.3" lengthAdjust="spacingAndGlyphs">10:40</text><text x="193.93" y="355.00" font-size="9.9" fill="#bdbdbd" text-anchor="end" textLength="22.3" lengthAdjust="spacingAndGlyphs">10:40</text><text x="271.27" y="355.00" font-size="9.9" fill="#bdbdbd" text-anchor="end" textLength="22.3" lengthAdjust="spacingAndGlyphs">10:40</text><text x="348.60" y="355.00" font-size="9.9" fill="#bdbdbd" text-anchor="end" textLength="22.3" lengthAdjust="spacingAndGlyphs">10:40</text><text x="425.93" y="355.00" font-size="9.9" fill="#bdbdbd" text-anchor="end" textLength="22.3" lengthAdjust="spacingAndGlyphs">10:40</text><text x="503.26" y="355.00" font-size="9.9" fill="#bdbdbd" text-anchor="end" textLength="22.3" lengthAdjust="spacingAndGlyphs">10:40</text><text x="580.60" y="355.00" font-size="9.9" fill="#bdbdbd" text-anchor="end" textLength="22.3" lengthAdjust="spacingAndGlyphs">10:40</text><text x="657.93" y="355.00" font-size="9.9" fill="#bdbdbd" text-anchor="end" textLength="22.3" lengthAdjust="spacingAndGlyphs">10:40</text><text x="735.26" y="355.00" font-size="9.9" fill="#bdbdbd" text-anchor="end" textLength="22.3" lengthAdjust="spacingAndGlyphs">10:40</text><text x="116.60" y="391.80" font-size="9.9" fill="#2e2e2e" text-anchor="end" textLength="22.3" lengthAdjust="spacingAndGlyphs" stroke="#2e2e2e" stroke-width="0.1">10:50</text><text x="116.60" y="404.10" font-size="9.9" fill="#2e2e2e" text-anchor="end" textLength="24" lengthAdjust="spacingAndGlyphs" stroke="#2e2e2e" stroke-width="0.1">+2 / 4</text><text x="193.93" y="391.80" font-size="9.9" fill="#bdbdbd" text-anchor="end" textLength="22.3" lengthAdjust="spacingAndGlyphs">10:50</text><text x="271.27" y="391.80" font-size="9.9" fill="#bdbdbd" text-anchor="end" textLength="22.3" lengthAdjust="spacingAndGlyphs">10:50</text><text x="348.60" y="391.80" font-size="9.9" fill="#bdbdbd" text-anchor="end" textLength="22.3" lengthAdjust="spacingAndGlyphs">10:50</text><text x="425.93" y="391.80" font-size="9.9" fill="#bdbdbd" text-anchor="end" textLength="22.3" lengthAdjust="spacingAndGlyphs">10:50</text><text x="503.26" y="391.80" font-size="9.9" fill="#bdbdbd" text-anchor="end" textLength="22.3" lengthAdjust="spacingAndGlyphs">10:50</text><text x="580.60" y="391.80" font-size="9.9" fill="#bdbdbd" text-anchor="end" textLength="22.3" lengthAdjust="spacingAndGlyphs">10:50</text><text x="657.93" y="391.80" font-size="9.9" fill="#bdbdbd" text-anchor="end" textLength="22.3" lengthAdjust="spacingAndGlyphs">10:50</text><text x="735.26" y="391.80" font-size="9.9" fill="#bdbdbd" text-anchor="end" textLength="22.3" lengthAdjust="spacingAndGlyphs">10:50</text><text x="116.60" y="428.60" font-size="9.9" fill="#bdbdbd" text-anchor="end" textLength="22.3" lengthAdjust="spacingAndGlyphs">11:00</text><text x="193.93" y="428.60" font-size="9.9" fill="#bdbdbd" text-anchor="end" textLength="22.3" lengthAdjust="spacingAndGlyphs">11:00</text><text x="271.27" y="428.60" font-size="9.9" fill="#bdbdbd" text-anchor="end" textLength="22.3" lengthAdjust="spacingAndGlyphs">11:00</text><text x="348.60" y="428.60" font-size="9.9" fill="#bdbdbd" text-anchor="end" textLength="22.3" lengthAdjust="spacingAndGlyphs">11:00</text><text x="425.93" y="428.60" font-size="9.9" fill="#bdbdbd" text-anchor="end" textLength="22.3" lengthAdjust="spacingAndGlyphs">11:00</text><text x="503.26" y="428.60" font-size="9.9" fill="#bdbdbd" text-anchor="end" textLength="22.3" lengthAdjust="spacingAndGlyphs">11:00</text><text x="580.60" y="428.60" font-size="9.9" fill="#bdbdbd" text-anchor="end" textLength="22.3" lengthAdjust="spacingAndGlyphs">11:00</text><text x="657.93" y="428.60" font-size="9.9" fill="#bdbdbd" text-anchor="end" textLength="22.3" lengthAdjust="spacingAndGlyphs">11:00</text><text x="735.26" y="428.60" font-size="9.9" fill="#bdbdbd" text-anchor="end" textLength="22.3" lengthAdjust="spacingAndGlyphs">11:00</text><text x="116.60" y="465.40" font-size="9.9" fill="#2e2e2e" text-anchor="end" textLength="22.3" lengthAdjust="spacingAndGlyphs" stroke="#2e2e2e" stroke-width="0.1">11:10</text><text x="116.60" y="477.70" font-size="9.9" fill="#2e2e2e" text-anchor="end" textLength="24" lengthAdjust="spacingAndGlyphs" stroke="#2e2e2e" stroke-width="0.1">+1 / 4</text><text x="193.93" y="465.40" font-size="9.9" fill="#2e2e2e" text-anchor="end" textLength="22.3" lengthAdjust="spacingAndGlyphs" stroke="#2e2e2e" stroke-width="0.1">11:10</text><text x="271.27" y="465.40" font-size="9.9" fill="#bdbdbd" text-anchor="end" textLength="22.3" lengthAdjust="spacingAndGlyphs">11:10</text><text x="348.60" y="465.40" font-size="9.9" fill="#bdbdbd" text-anchor="end" textLength="22.3" lengthAdjust="spacingAndGlyphs">11:10</text><text x="425.93" y="465.40" font-size="9.9" fill="#bdbdbd" text-anchor="end" textLength="22.3" lengthAdjust="spacingAndGlyphs">11:10</text><text x="503.26" y="465.40" font-size="9.9" fill="#bdbdbd" text-anchor="end" textLength="22.3" lengthAdjust="spacingAndGlyphs">11:10</text><text x="580.60" y="465.40" font-size="9.9" fill="#bdbdbd" text-anchor="end" textLength="22.3" lengthAdjust="spacingAndGlyphs">11:10</text><text x="657.93" y="465.40" font-size="9.9" fill="#bdbdbd" text-anchor="end" textLength="22.3" lengthAdjust="spacingAndGlyphs">11:10</text><text x="735.26" y="465.40" font-size="9.9" fill="#bdbdbd" text-anchor="end" textLength="22.3" lengthAdjust="spacingAndGlyphs">11:10</text><text x="116.60" y="502.20" font-size="9.9" fill="#bdbdbd" text-anchor="end" textLength="22.3" lengthAdjust="spacingAndGlyphs">11:20</text><text x="193.93" y="502.20" font-size="9.9" fill="#2e2e2e" text-anchor="end" textLength="22.3" lengthAdjust="spacingAndGlyphs" stroke="#2e2e2e" stroke-width="0.1">11:20</text><text x="271.27" y="502.20" font-size="9.9" fill="#bdbdbd" text-anchor="end" textLength="22.3" lengthAdjust="spacingAndGlyphs">11:20</text><text x="348.60" y="502.20" font-size="9.9" fill="#bdbdbd" text-anchor="end" textLength="22.3" lengthAdjust="spacingAndGlyphs">11:20</text><text x="425.93" y="502.20" font-size="9.9" fill="#bdbdbd" text-anchor="end" textLength="22.3" lengthAdjust="spacingAndGlyphs">11:20</text><text x="503.26" y="502.20" font-size="9.9" fill="#bdbdbd" text-anchor="end" textLength="22.3" lengthAdjust="spacingAndGlyphs">11:20</text><text x="580.60" y="502.20" font-size="9.9" fill="#bdbdbd" text-anchor="end" textLength="22.3" lengthAdjust="spacingAndGlyphs">11:20</text><text x="657.93" y="502.20" font-size="9.9" fill="#bdbdbd" text-anchor="end" textLength="22.3" lengthAdjust="spacingAndGlyphs">11:20</text><text x="735.26" y="502.20" font-size="9.9" fill="#bdbdbd" text-anchor="end" textLength="22.3" lengthAdjust="spacingAndGlyphs">11:20</text><text x="10.70" y="547.40" font-size="11.8" fill="#1e9c55" textLength="74.3" lengthAdjust="spacingAndGlyphs">Расшифровка</text><rect x="10.70" y="548.80" width="74.3" height="1" fill="#1e9c55"/><text x="828.50" y="547.40" font-size="11.8" fill="#1e9c55" textLength="56" lengthAdjust="spacingAndGlyphs">Настройки</text><rect x="828.50" y="548.80" width="56" height="1" fill="#1e9c55"/></svg>
</body></html>
